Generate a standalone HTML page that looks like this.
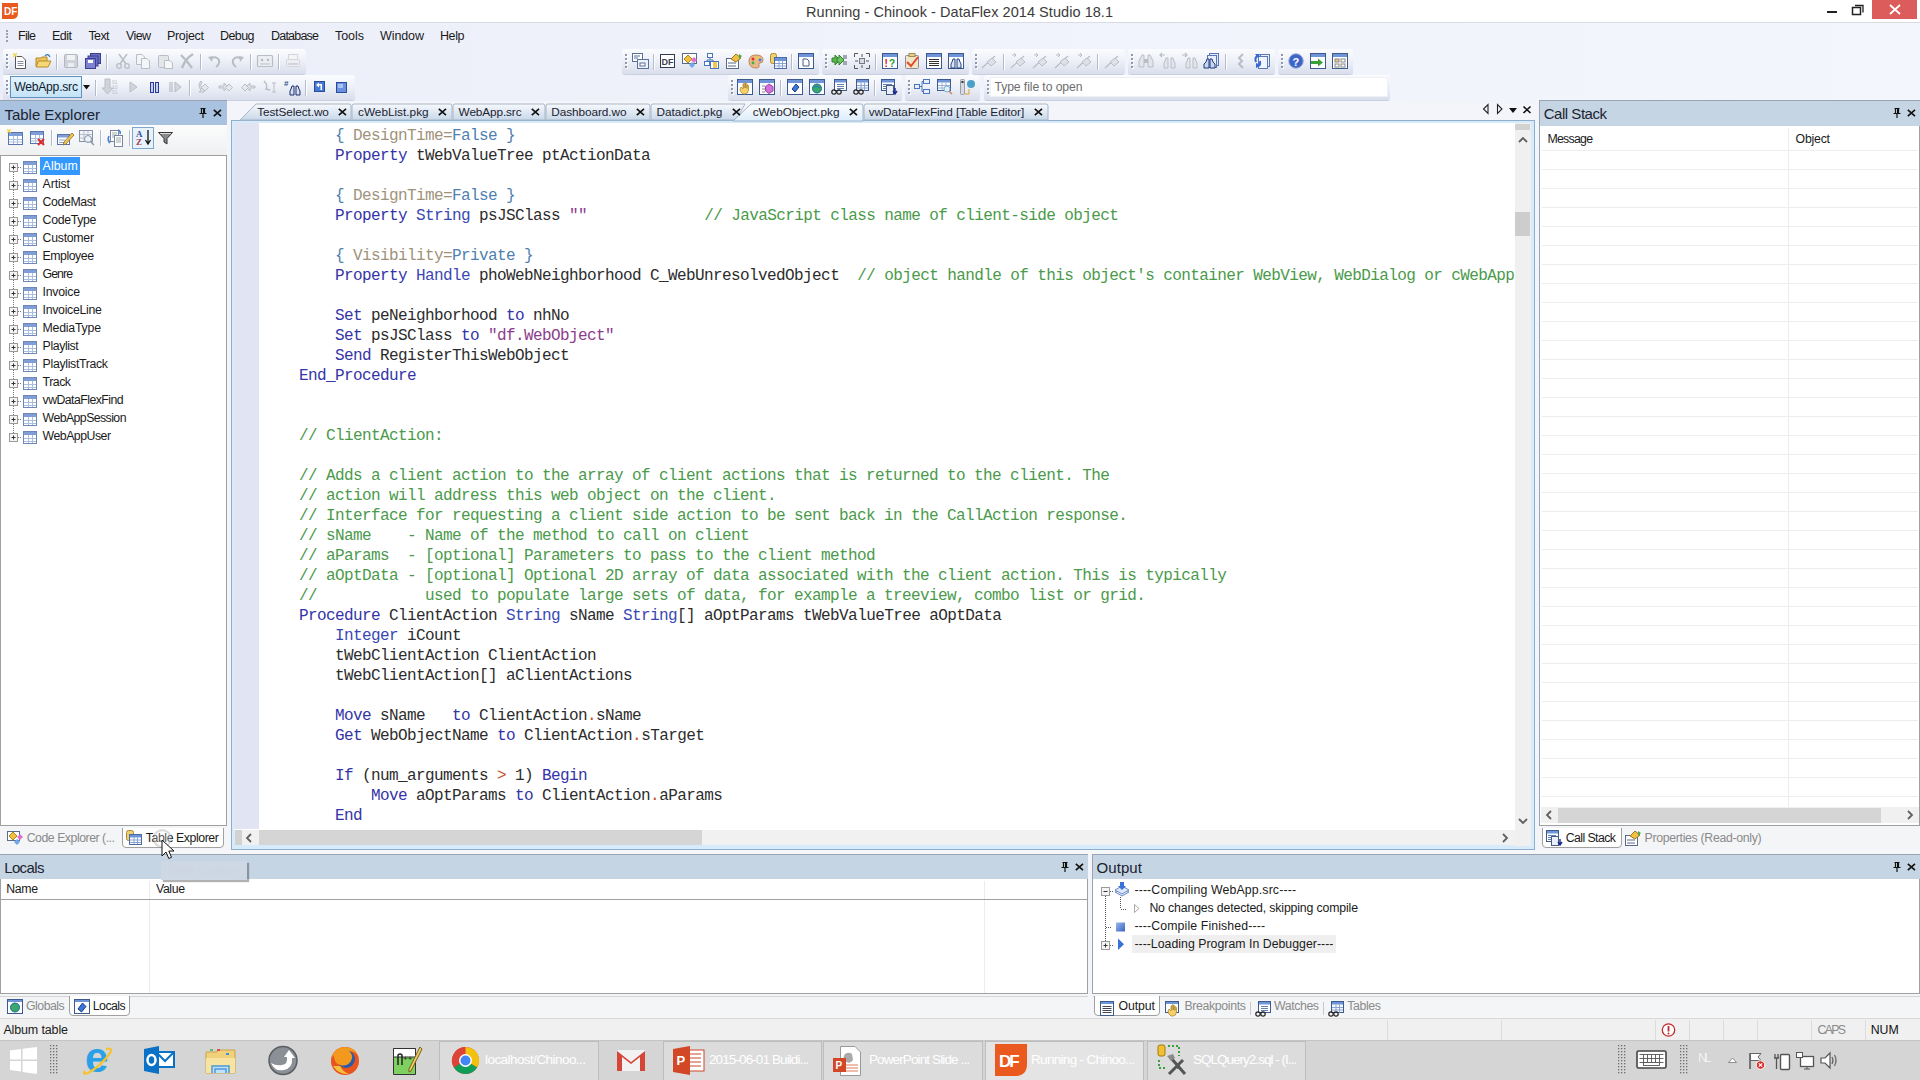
<!DOCTYPE html>
<html><head><meta charset="utf-8"><title>DataFlex Studio</title>
<style>
*{box-sizing:border-box}
html,body{margin:0;padding:0}
body{width:1920px;height:1080px;position:relative;overflow:hidden;background:#f3f5fa;font-family:"Liberation Sans",sans-serif;color:#1e1e1e}
.a{position:absolute}
.t{position:absolute;white-space:pre;line-height:1}
svg{position:absolute;overflow:visible}
#code{position:absolute;left:65px;top:3px;font-family:"Liberation Mono",monospace;font-size:16px;letter-spacing:-0.6px;line-height:20px;white-space:pre;color:#2c2c2c}
#code .k{color:#3434a8}
#code .y{color:#3a48b4}
#code .c{color:#4a9a4a}
#code .s{color:#8c3c8c}
#code .b{color:#4f80b0}
#code .m{color:#a0927a}
#code .o{color:#c8502a}

</style></head><body>
<div class="a" style="left:0px;top:0px;width:1920px;height:22px;background:#fff"></div>
<div class="a" style="left:0px;top:22px;width:1920px;height:1px;background:#d9dce3"></div>
<svg style="left:2px;top:3px" width="16" height="16"><path d="M0 0H16V10Q16 16 10 16H0Z" fill="#ea5a1e"/><text x="2" y="12" font-family="Liberation Sans" font-weight="bold" font-size="10" fill="#fff">DF</text></svg>
<div class="t" style="left:806px;top:5px;font-size:14.5px;color:#3b3b3b;letter-spacing:0.053px;">Running - Chinook - DataFlex 2014 Studio 18.1</div>
<div class="a" style="left:1827px;top:11px;width:10px;height:2px;background:#222"></div>
<svg style="left:1851px;top:4px" width="14" height="12"><rect x="1.5" y="3.5" width="8" height="7" fill="none" stroke="#222" stroke-width="1.5"/><path d="M4 1.5H12V8.5" fill="none" stroke="#222" stroke-width="1.3"/></svg>
<div class="a" style="left:1872px;top:0px;width:45px;height:19px;background:#dc5c5c"></div>
<svg style="left:1889px;top:4px" width="12" height="11"><path d="M1 1L11 10M11 1L1 10" stroke="#fff" stroke-width="1.8"/></svg>
<div class="a" style="left:0px;top:23px;width:1920px;height:78px;background:linear-gradient(90deg,#ebedf8 0%,#eff2fb 40%,#f3f6fc 100%)"></div>
<div class="a" style="left:6px;top:30.0px;width:2px;height:2px;background:#9aa0b0"></div>
<div class="a" style="left:6px;top:33.2px;width:2px;height:2px;background:#9aa0b0"></div>
<div class="a" style="left:6px;top:36.4px;width:2px;height:2px;background:#9aa0b0"></div>
<div class="a" style="left:6px;top:39.6px;width:2px;height:2px;background:#9aa0b0"></div>
<div class="t" style="left:18px;top:30px;font-size:12.5px;color:#1b1b1b;letter-spacing:-0.719px;">File</div>
<div class="t" style="left:52px;top:30px;font-size:12.5px;color:#1b1b1b;letter-spacing:-0.516px;">Edit</div>
<div class="t" style="left:88.5px;top:30px;font-size:12.5px;color:#1b1b1b;letter-spacing:-0.646px;">Text</div>
<div class="t" style="left:126px;top:30px;font-size:12.5px;color:#1b1b1b;letter-spacing:-0.625px;">View</div>
<div class="t" style="left:167px;top:30px;font-size:12.5px;color:#1b1b1b;letter-spacing:-0.318px;">Project</div>
<div class="t" style="left:220px;top:30px;font-size:12.5px;color:#1b1b1b;letter-spacing:-0.586px;">Debug</div>
<div class="t" style="left:271px;top:30px;font-size:12.5px;color:#1b1b1b;letter-spacing:-0.788px;">Database</div>
<div class="t" style="left:335px;top:30px;font-size:12.5px;color:#1b1b1b;letter-spacing:-0.047px;">Tools</div>
<div class="t" style="left:380px;top:30px;font-size:12.5px;color:#1b1b1b;letter-spacing:-0.094px;">Window</div>
<div class="t" style="left:440px;top:30px;font-size:12.5px;color:#1b1b1b;letter-spacing:-0.406px;">Help</div>
<div class="a" style="left:3px;top:49px;width:303px;height:25px;border-radius:3px;background:linear-gradient(#fbfcfe 0%,#eef1f8 45%,#d9deec 100%);box-shadow:0 1px 0 #c9cfe0"></div>
<div class="a" style="left:6px;top:54px;width:2px;height:2px;background:#8f98ab;box-shadow:1px 1px 0 #fff"></div>
<div class="a" style="left:6px;top:58px;width:2px;height:2px;background:#8f98ab;box-shadow:1px 1px 0 #fff"></div>
<div class="a" style="left:6px;top:62px;width:2px;height:2px;background:#8f98ab;box-shadow:1px 1px 0 #fff"></div>
<div class="a" style="left:6px;top:66px;width:2px;height:2px;background:#8f98ab;box-shadow:1px 1px 0 #fff"></div>
<svg style="left:12px;top:53px" width="16" height="16" viewBox="0 0 16 16"><path d="M3.5 3.5H10L13.5 7V15.5H3.5Z" fill="#fff" stroke="#555"/><path d="M5.5 8.5H11.5M5.5 10.5H11.5M5.5 12.5H11.5" stroke="#8a93a6"/><path d="M1 2H5M3 0V4M1 0L5 4M5 0L1 4" stroke="#f2d54a" stroke-width="0.9"/></svg>
<svg style="left:35px;top:53px" width="17" height="16" viewBox="0 0 17 16"><path d="M1 5H6L7 4H12V13H1Z" fill="#e9c45a" stroke="#b98a2a"/><path d="M1 14L3.5 8H16L13 14Z" fill="#f7d776" stroke="#b98a2a"/><path d="M10 3Q13 0 15 4" fill="none" stroke="#3f7fbf" stroke-width="1.3"/></svg>
<div class="a" style="left:56px;top:54px;width:1px;height:16px;background:#b4bbcc;box-shadow:1px 0 0 #fff"></div>
<svg style="left:63px;top:53px" width="16" height="16" viewBox="0 0 16 16"><rect x="1.5" y="1.5" width="13" height="13" rx="1" fill="#cfd2da" stroke="#b3b7c1"/><rect x="4" y="2" width="8" height="5" fill="#fff" opacity="0.7"/><rect x="5" y="10" width="6" height="4" fill="#fff" opacity="0.6"/></svg>
<svg style="left:85px;top:53px" width="16" height="16" viewBox="0 0 16 16"><rect x="5.5" y="0.5" width="10" height="10" fill="#6a6fc4" stroke="#3b3f8f"/><rect x="3" y="3" width="10" height="10" fill="#6a6fc4" stroke="#3b3f8f"/><rect x="0.5" y="5.5" width="10" height="10" fill="#7c81d0" stroke="#3b3f8f"/><rect x="3" y="7" width="5" height="3" fill="#fff"/></svg>
<div class="a" style="left:106px;top:54px;width:1px;height:16px;background:#b4bbcc;box-shadow:1px 0 0 #fff"></div>
<svg style="left:115px;top:53px" width="16" height="16" viewBox="0 0 16 16"><path d="M4 1L11 11M12 1L5 11" stroke="#b9bdc6" stroke-width="1.5"/><circle cx="4" cy="13" r="2.3" fill="none" stroke="#b9bdc6" stroke-width="1.3"/><circle cx="12" cy="13" r="2.3" fill="none" stroke="#b9bdc6" stroke-width="1.3"/></svg>
<svg style="left:135px;top:53px" width="16" height="16" viewBox="0 0 16 16"><path d="M1.5 1.5H7L9.5 4V11.5H1.5Z" fill="#f4f5f8" stroke="#b9bdc6"/><path d="M6.5 5.5H12L14.5 8V15.5H6.5Z" fill="#f4f5f8" stroke="#b9bdc6"/></svg>
<svg style="left:157px;top:53px" width="16" height="16" viewBox="0 0 16 16"><rect x="1.5" y="2.5" width="10" height="12" rx="1" fill="#e4e6ea" stroke="#b9bdc6"/><path d="M7.5 7.5H13L15.5 10V15.5H7.5Z" fill="#f7f7f9" stroke="#b9bdc6"/></svg>
<svg style="left:179px;top:53px" width="16" height="16" viewBox="0 0 16 16"><path d="M2 2Q8 8 13 15M14 1Q6 6 3 15" stroke="#b9bdc6" stroke-width="2.4" fill="none"/></svg>
<div class="a" style="left:200px;top:54px;width:1px;height:16px;background:#b4bbcc;box-shadow:1px 0 0 #fff"></div>
<svg style="left:207px;top:53px" width="16" height="16" viewBox="0 0 16 16"><path d="M3 6Q9 2 12 7Q13 11 9 14" fill="none" stroke="#b9bdc6" stroke-width="2"/><path d="M1 4L5 9L6 3Z" fill="#b9bdc6"/></svg>
<svg style="left:229px;top:53px" width="16" height="16" viewBox="0 0 16 16"><path d="M13 6Q7 2 4 7Q3 11 7 14" fill="none" stroke="#b9bdc6" stroke-width="2"/><path d="M15 4L11 9L10 3Z" fill="#b9bdc6"/></svg>
<div class="a" style="left:250px;top:54px;width:1px;height:16px;background:#b4bbcc;box-shadow:1px 0 0 #fff"></div>
<svg style="left:257px;top:53px" width="16" height="16" viewBox="0 0 16 16"><rect x="0.5" y="2.5" width="15" height="11" rx="1" fill="#eceef2" stroke="#b9bdc6" stroke-width="1.2"/><circle cx="5" cy="7" r="1.3" fill="#b9bdc6"/><circle cx="11" cy="7" r="1.3" fill="#b9bdc6"/><path d="M3 11H13" stroke="#b9bdc6"/></svg>
<div class="a" style="left:278px;top:54px;width:1px;height:16px;background:#b4bbcc;box-shadow:1px 0 0 #fff"></div>
<svg style="left:285px;top:53px" width="16" height="16" viewBox="0 0 16 16"><rect x="3.5" y="1.5" width="9" height="6" fill="#f5f5f7" stroke="#d4d6dc"/><rect x="1.5" y="6.5" width="13" height="7" rx="1" fill="#eceef2" stroke="#d4d6dc"/><path d="M3 11H13" stroke="#b9bdc6"/></svg>
<div class="a" style="left:622px;top:49px;width:197px;height:25px;border-radius:3px;background:linear-gradient(#fbfcfe 0%,#eef1f8 45%,#d9deec 100%);box-shadow:0 1px 0 #c9cfe0"></div>
<div class="a" style="left:625px;top:54px;width:2px;height:2px;background:#8f98ab;box-shadow:1px 1px 0 #fff"></div>
<div class="a" style="left:625px;top:58px;width:2px;height:2px;background:#8f98ab;box-shadow:1px 1px 0 #fff"></div>
<div class="a" style="left:625px;top:62px;width:2px;height:2px;background:#8f98ab;box-shadow:1px 1px 0 #fff"></div>
<div class="a" style="left:625px;top:66px;width:2px;height:2px;background:#8f98ab;box-shadow:1px 1px 0 #fff"></div>
<svg style="left:632px;top:53px" width="17" height="16" viewBox="0 0 17 16"><rect x="0.5" y="0.5" width="10" height="8" fill="#fff" stroke="#5a6f9a"/><path d="M2 3H8M2 5H6" stroke="#5a6f9a"/><rect x="5.5" y="6.5" width="11" height="9" fill="#eef2fa" stroke="#5a6f9a"/><rect x="8" y="10" width="5" height="3" fill="#fff" stroke="#5a6f9a"/></svg>
<div class="a" style="left:653px;top:54px;width:1px;height:16px;background:#b4bbcc;box-shadow:1px 0 0 #fff"></div>
<svg style="left:660px;top:53px" width="15" height="16" viewBox="0 0 15 16"><rect x="0.5" y="1.5" width="14" height="13" fill="#fff" stroke="#333c4e"/><text x="1.5" y="12" font-family="Liberation Sans" font-weight="bold" font-size="9" fill="#39414f">DF</text></svg>
<svg style="left:682px;top:53px" width="16" height="16" viewBox="0 0 16 16"><rect x="0.5" y="0.5" width="14" height="10" fill="#fff" stroke="#5b6a8f"/><path d="M2 6L6 2L10 6L6 10Z" fill="#f0c040" stroke="#b0861c"/><path d="M9 7L12 4L15 7L12 10Z" fill="#e070d0"/><path d="M7 12L10 9L13 12L10 15Z" fill="#6ea8e8"/></svg>
<svg style="left:704px;top:53px" width="16" height="16" viewBox="0 0 16 16"><rect x="3.5" y="0.5" width="5" height="4" fill="#fff" stroke="#4a74c0"/><rect x="0.5" y="8.5" width="5" height="4" fill="#fff" stroke="#4a74c0"/><path d="M6 5V7H3V8M6 7H9V9" stroke="#4a74c0" fill="none"/><rect x="6.5" y="8.5" width="8" height="7" fill="#fff" stroke="#4a74c0"/><rect x="9" y="9" width="4" height="6" fill="#f0c850"/></svg>
<svg style="left:726px;top:53px" width="17" height="16" viewBox="0 0 17 16"><rect x="0.5" y="5.5" width="12" height="10" fill="#fff" stroke="#5a6a8a"/><path d="M2 10H10M2 13H10" stroke="#5a6a8a"/><path d="M5 6L10 1L15 5L10 9Z" fill="#f0c040" stroke="#a07820"/><path d="M13 1L16 3L13 6Z" fill="#4ca84c"/></svg>
<svg style="left:748px;top:53px" width="16" height="16" viewBox="0 0 16 16"><path d="M1 8Q1 2 8 2Q15 2 15 7Q15 10 12 10Q10 10 11 12Q12 15 8 15Q1 15 1 8Z" fill="#e8b88a" stroke="#c0895a"/><circle cx="5" cy="6" r="1.5" fill="#e03030"/><circle cx="9" cy="5" r="1.5" fill="#f0d030"/><circle cx="12" cy="7" r="1.4" fill="#4080e0"/><circle cx="5" cy="10" r="1.4" fill="#40b040"/></svg>
<svg style="left:770px;top:53px" width="17" height="16" viewBox="0 0 17 16"><rect x="0.5" y="0.5" width="6" height="10" rx="2" fill="#f0d070" stroke="#b08a30"/><rect x="4.5" y="4.5" width="12" height="11" fill="#fff" stroke="#4c6aa8"/><rect x="5" y="5" width="11" height="3" fill="#6f95d8"/><path d="M5 10.5H16M5 13H16M9 8V15M12.5 8V15" stroke="#8aa3d0"/></svg>
<div class="a" style="left:791px;top:54px;width:1px;height:16px;background:#b4bbcc;box-shadow:1px 0 0 #fff"></div>
<svg style="left:798px;top:53px" width="16" height="16" viewBox="0 0 16 16"><rect x="0.5" y="0.5" width="15" height="15" fill="#fff" stroke="#3d5a8f"/><rect x="1" y="1" width="14" height="3" fill="#6f95d8"/><path d="M5 6H9L11 8V13H5Z" fill="#fff" stroke="#4a5a80"/></svg>
<div class="a" style="left:822px;top:49px;width:147px;height:25px;border-radius:3px;background:linear-gradient(#fbfcfe 0%,#eef1f8 45%,#d9deec 100%);box-shadow:0 1px 0 #c9cfe0"></div>
<div class="a" style="left:825px;top:54px;width:2px;height:2px;background:#8f98ab;box-shadow:1px 1px 0 #fff"></div>
<div class="a" style="left:825px;top:58px;width:2px;height:2px;background:#8f98ab;box-shadow:1px 1px 0 #fff"></div>
<div class="a" style="left:825px;top:62px;width:2px;height:2px;background:#8f98ab;box-shadow:1px 1px 0 #fff"></div>
<div class="a" style="left:825px;top:66px;width:2px;height:2px;background:#8f98ab;box-shadow:1px 1px 0 #fff"></div>
<svg style="left:832px;top:53px" width="16" height="16" viewBox="0 0 16 16"><path d="M0 5H3V2L8 7L3 12V9H0Z" fill="#5cb84c" stroke="#2f7f2f"/><path d="M5 5H7V2L12 7L7 12V9H5Z" fill="#6cc85c" stroke="#2f7f2f"/><rect x="11" y="2" width="4" height="4" fill="#a0a6b0"/><rect x="11" y="8" width="4" height="4" fill="#a0a6b0"/></svg>
<svg style="left:854px;top:53px" width="16" height="16" viewBox="0 0 16 16"><path d="M0.5 4V0.5H4M12 0.5H15.5V4M15.5 12V15.5H12M4 15.5H0.5V12" fill="none" stroke="#556" /><rect x="5.5" y="5.5" width="5" height="5" fill="#d8dbe2" stroke="#778"/><path d="M8 1V4M8 12V15M1 8H4M12 8H15" stroke="#556"/></svg>
<div class="a" style="left:875px;top:54px;width:1px;height:16px;background:#b4bbcc;box-shadow:1px 0 0 #fff"></div>
<svg style="left:882px;top:53px" width="16" height="16" viewBox="0 0 16 16"><rect x="0.5" y="0.5" width="15" height="15" fill="#fff" stroke="#3d5a8f"/><rect x="1" y="1" width="14" height="3" fill="#6f95d8"/><text x="2.5" y="13.5" font-family="Liberation Sans" font-weight="bold" font-size="10" fill="#d02020">!</text><text x="7" y="13.5" font-family="Liberation Sans" font-weight="bold" font-size="10" fill="#2a9a2a">?</text></svg>
<svg style="left:905px;top:53px" width="14" height="16" viewBox="0 0 14 16"><rect x="0.5" y="2.5" width="13" height="13" rx="1" fill="#f1e6c8" stroke="#8a8a9a"/><rect x="4" y="0.5" width="6" height="3" fill="#e8d080" stroke="#a08a50"/><path d="M2 9L6 13L13 4" fill="none" stroke="#e04a2a" stroke-width="2"/></svg>
<svg style="left:926px;top:53px" width="16" height="16" viewBox="0 0 16 16"><rect x="0.5" y="0.5" width="15" height="15" fill="#fff" stroke="#3d5a8f"/><rect x="1" y="1" width="14" height="3" fill="#6f95d8"/><path d="M3 6.5H13M3 8.5H13M3 10.5H13M3 12.5H13" stroke="#333"/></svg>
<svg style="left:948px;top:53px" width="16" height="16" viewBox="0 0 16 16"><rect x="0.5" y="0.5" width="15" height="15" fill="#fff" stroke="#3d5a8f"/><rect x="1" y="1" width="14" height="3" fill="#6f95d8"/><path d="M4 9L5 6H7V15H3V11Z M12 9L11 6H9V15H13V11Z" fill="#dde6f5" stroke="#243f7a"/></svg>
<div class="a" style="left:972px;top:49px;width:153px;height:25px;border-radius:3px;background:linear-gradient(#fbfcfe 0%,#eef1f8 45%,#d9deec 100%);box-shadow:0 1px 0 #c9cfe0"></div>
<div class="a" style="left:975px;top:54px;width:2px;height:2px;background:#8f98ab;box-shadow:1px 1px 0 #fff"></div>
<div class="a" style="left:975px;top:58px;width:2px;height:2px;background:#8f98ab;box-shadow:1px 1px 0 #fff"></div>
<div class="a" style="left:975px;top:62px;width:2px;height:2px;background:#8f98ab;box-shadow:1px 1px 0 #fff"></div>
<div class="a" style="left:975px;top:66px;width:2px;height:2px;background:#8f98ab;box-shadow:1px 1px 0 #fff"></div>
<svg style="left:981px;top:53px" width="16" height="16" viewBox="0 0 16 16"><path d="M1 15L14 3" stroke="#b9bdc6" stroke-width="1.2"/><path d="M6 9L11 5L15 9L10 13Z" fill="#dfe1e6" stroke="#b9bdc6"/></svg>
<div class="a" style="left:1003px;top:54px;width:1px;height:16px;background:#b4bbcc;box-shadow:1px 0 0 #fff"></div>
<svg style="left:1010px;top:53px" width="16" height="16" viewBox="0 0 16 16"><path d="M1 15L14 3" stroke="#b9bdc6" stroke-width="1.2"/><path d="M6 9L11 5L15 9L10 13Z" fill="#dfe1e6" stroke="#b9bdc6"/><path d="M2 2H6M4 0L6 2L4 4" fill="none" stroke="#b9bdc6"/></svg>
<svg style="left:1032px;top:53px" width="16" height="16" viewBox="0 0 16 16"><path d="M1 15L14 3" stroke="#b9bdc6" stroke-width="1.2"/><path d="M6 9L11 5L15 9L10 13Z" fill="#dfe1e6" stroke="#b9bdc6"/><path d="M2 2H6M4 0L6 2L4 4" fill="none" stroke="#b9bdc6"/></svg>
<svg style="left:1054px;top:53px" width="16" height="16" viewBox="0 0 16 16"><path d="M1 15L14 3" stroke="#b9bdc6" stroke-width="1.2"/><path d="M6 9L11 5L15 9L10 13Z" fill="#dfe1e6" stroke="#b9bdc6"/><path d="M2 2H6M4 0L6 2L4 4" fill="none" stroke="#b9bdc6"/></svg>
<svg style="left:1076px;top:53px" width="16" height="16" viewBox="0 0 16 16"><path d="M1 15L14 3" stroke="#b9bdc6" stroke-width="1.2"/><path d="M6 9L11 5L15 9L10 13Z" fill="#dfe1e6" stroke="#b9bdc6"/><path d="M2 2H6M4 0L6 2L4 4" fill="none" stroke="#b9bdc6"/></svg>
<div class="a" style="left:1097px;top:54px;width:1px;height:16px;background:#b4bbcc;box-shadow:1px 0 0 #fff"></div>
<svg style="left:1104px;top:53px" width="16" height="16" viewBox="0 0 16 16"><path d="M1 15L14 3" stroke="#b9bdc6" stroke-width="1.2"/><path d="M6 9L11 5L15 9L10 13Z" fill="#dfe1e6" stroke="#b9bdc6"/></svg>
<div class="a" style="left:1128px;top:49px;width:147px;height:25px;border-radius:3px;background:linear-gradient(#fbfcfe 0%,#eef1f8 45%,#d9deec 100%);box-shadow:0 1px 0 #c9cfe0"></div>
<div class="a" style="left:1131px;top:54px;width:2px;height:2px;background:#8f98ab;box-shadow:1px 1px 0 #fff"></div>
<div class="a" style="left:1131px;top:58px;width:2px;height:2px;background:#8f98ab;box-shadow:1px 1px 0 #fff"></div>
<div class="a" style="left:1131px;top:62px;width:2px;height:2px;background:#8f98ab;box-shadow:1px 1px 0 #fff"></div>
<div class="a" style="left:1131px;top:66px;width:2px;height:2px;background:#8f98ab;box-shadow:1px 1px 0 #fff"></div>
<svg style="left:1138px;top:53px" width="16" height="16" viewBox="0 0 16 16"><path d="M2 6L4 2H6V14H1V8Z M14 6L12 2H10V14H15V8Z" fill="#e3e5ea" stroke="#b9bdc6"/><rect x="6" y="6" width="4" height="4" fill="#b9bdc6"/></svg>
<svg style="left:1160px;top:53px" width="16" height="16" viewBox="0 0 16 16"><path d="M5 8L6 5H8V15H4V10Z M14 8L13 5H11V15H15V10Z" fill="#e3e5ea" stroke="#b9bdc6"/><path d="M0 2H5M2 0L0 2L2 4" fill="none" stroke="#b9bdc6" stroke-width="1.2"/></svg>
<svg style="left:1182px;top:53px" width="16" height="16" viewBox="0 0 16 16"><path d="M5 8L6 5H8V15H4V10Z M14 8L13 5H11V15H15V10Z" fill="#e3e5ea" stroke="#b9bdc6"/><path d="M0 2H5M3 0L5 2L3 4" fill="none" stroke="#b9bdc6" stroke-width="1.2"/></svg>
<svg style="left:1203px;top:53px" width="17" height="16" viewBox="0 0 17 16"><rect x="6.5" y="0.5" width="9" height="12" fill="#dfe8f8" stroke="#5a78b8"/><rect x="4.5" y="2.5" width="9" height="12" fill="#e8eefa" stroke="#5a78b8"/><path d="M3 9L4 6H6V15H1V11Z M10 9L9 6H7V15H12V11Z" fill="#c8d6f0" stroke="#1f3a78"/></svg>
<div class="a" style="left:1225px;top:54px;width:1px;height:16px;background:#b4bbcc;box-shadow:1px 0 0 #fff"></div>
<svg style="left:1235px;top:53px" width="16" height="16" viewBox="0 0 16 16"><path d="M8 1L4 5L7 8L4 11L8 15" fill="none" stroke="#b9bdc6" stroke-width="2"/></svg>
<svg style="left:1253px;top:53px" width="18" height="16" viewBox="0 0 18 16"><rect x="7.5" y="1.5" width="9" height="12" fill="#e8eefa" stroke="#5a78b8"/><rect x="5.5" y="3.5" width="9" height="12" fill="#f0f4fc" stroke="#5a78b8"/><path d="M6 2Q1 4 3 9M3 13Q8 14 7 8" fill="none" stroke="#3a6ad0" stroke-width="2"/><path d="M2 1L7 1L5 5Z M3 15L8 12L3 10Z" fill="#3a6ad0"/></svg>
<div class="a" style="left:1278px;top:49px;width:75px;height:25px;border-radius:3px;background:linear-gradient(#fbfcfe 0%,#eef1f8 45%,#d9deec 100%);box-shadow:0 1px 0 #c9cfe0"></div>
<div class="a" style="left:1281px;top:54px;width:2px;height:2px;background:#8f98ab;box-shadow:1px 1px 0 #fff"></div>
<div class="a" style="left:1281px;top:58px;width:2px;height:2px;background:#8f98ab;box-shadow:1px 1px 0 #fff"></div>
<div class="a" style="left:1281px;top:62px;width:2px;height:2px;background:#8f98ab;box-shadow:1px 1px 0 #fff"></div>
<div class="a" style="left:1281px;top:66px;width:2px;height:2px;background:#8f98ab;box-shadow:1px 1px 0 #fff"></div>
<svg style="left:1288px;top:53px" width="16" height="16" viewBox="0 0 16 16"><circle cx="8" cy="8" r="7.2" fill="#3f64c8" stroke="#8ea5d8"/><text x="4.4" y="12.5" font-family="Liberation Sans" font-weight="bold" font-size="11" fill="#fff">?</text></svg>
<svg style="left:1310px;top:53px" width="16" height="16" viewBox="0 0 16 16"><rect x="0.5" y="0.5" width="15" height="15" fill="#fff" stroke="#3d5a8f"/><rect x="1" y="1" width="14" height="3" fill="#6f95d8"/><path d="M1 8H8V5.5L13 9.5L8 13.5V11H1Z" fill="#3aa03a"/></svg>
<svg style="left:1332px;top:53px" width="16" height="16" viewBox="0 0 16 16"><rect x="0.5" y="0.5" width="15" height="15" fill="#fff" stroke="#3d5a8f"/><rect x="1" y="1" width="14" height="3" fill="#6f95d8"/><rect x="3" y="6" width="4" height="3" fill="#f0c870" stroke="#888"/><rect x="9" y="6" width="4" height="3" fill="#fff" stroke="#888"/><rect x="3" y="11" width="4" height="3" fill="#fff" stroke="#888"/><rect x="9" y="11" width="4" height="3" fill="#fff" stroke="#888"/></svg>
<div class="a" style="left:3px;top:75px;width:352px;height:25px;border-radius:3px;background:linear-gradient(#fbfcfe 0%,#eef1f8 45%,#d9deec 100%);box-shadow:0 1px 0 #c9cfe0"></div>
<div class="a" style="left:6px;top:80px;width:2px;height:2px;background:#8f98ab;box-shadow:1px 1px 0 #fff"></div>
<div class="a" style="left:6px;top:84px;width:2px;height:2px;background:#8f98ab;box-shadow:1px 1px 0 #fff"></div>
<div class="a" style="left:6px;top:88px;width:2px;height:2px;background:#8f98ab;box-shadow:1px 1px 0 #fff"></div>
<div class="a" style="left:6px;top:92px;width:2px;height:2px;background:#8f98ab;box-shadow:1px 1px 0 #fff"></div>
<div class="a" style="left:10px;top:76px;width:72px;height:22px;border:1px solid #5f91bd;background:linear-gradient(#e4f3fc,#c3e3f7)"></div>
<div class="t" style="left:14.2px;top:81px;font-size:12.2px;color:#10202c;letter-spacing:-0.262px;">WebApp.src</div>
<svg style="left:83px;top:85px" width="8" height="5" viewBox="0 0 8 5"><path d="M0 0H7L3.5 4.5Z" fill="#111"/></svg>
<div class="a" style="left:95px;top:80px;width:1px;height:16px;background:#b4bbcc;box-shadow:1px 0 0 #fff"></div>
<svg style="left:102px;top:79px" width="16" height="16" viewBox="0 0 16 16"><path d="M3 0H8V9H11L5.5 15L0 9H3Z" fill="#d0d3da" stroke="#b9bdc6"/><text x="10" y="5" font-size="5" fill="#b9bdc6" font-family="Liberation Sans">01</text><text x="10" y="10" font-size="5" fill="#b9bdc6" font-family="Liberation Sans">10</text><text x="10" y="15" font-size="5" fill="#b9bdc6" font-family="Liberation Sans">01</text></svg>
<svg style="left:126px;top:79px" width="16" height="16" viewBox="0 0 16 16"><path d="M4 3L11 8L4 13Z" fill="#d2d5db" stroke="#b9bdc6"/></svg>
<svg style="left:148px;top:79px" width="12" height="16" viewBox="0 0 12 16"><rect x="2.5" y="3.5" width="3" height="10" fill="#c8d0f0" stroke="#2a3a9a"/><rect x="7.5" y="3.5" width="3" height="10" fill="#c8d0f0" stroke="#2a3a9a"/></svg>
<svg style="left:169px;top:79px" width="16" height="16" viewBox="0 0 16 16"><path d="M1 3V13M3 3V13" stroke="#b9bdc6" stroke-width="1.2"/><path d="M6 3L12 8L6 13Z" fill="#d2d5db" stroke="#b9bdc6"/></svg>
<div class="a" style="left:189px;top:80px;width:1px;height:16px;background:#b4bbcc;box-shadow:1px 0 0 #fff"></div>
<svg style="left:196px;top:79px" width="16" height="16" viewBox="0 0 16 16"><path d="M5 2Q1 6 5 11L3 13H8V8L6 10Q3 6 6 3Z" fill="#dfe1e6" stroke="#b9bdc6"/><path d="M9 5L12.5 8.5L9 12L5.5 8.5Z" fill="#e6e8ec" stroke="#b9bdc6"/></svg>
<svg style="left:218px;top:79px" width="16" height="16" viewBox="0 0 16 16"><path d="M1 7H6V4L10 8L6 12V9H1Z" fill="#e2e4e8" stroke="#b9bdc6"/><path d="M11 5L14.5 8.5L11 12L7.5 8.5Z" fill="#e6e8ec" stroke="#b9bdc6"/></svg>
<svg style="left:240px;top:79px" width="16" height="16" viewBox="0 0 16 16"><path d="M15 7H10V4L6 8L10 12V9H15Z" fill="#e2e4e8" stroke="#b9bdc6"/><path d="M5 5L8.5 8.5L5 12L1.5 8.5Z" fill="#e6e8ec" stroke="#b9bdc6"/></svg>
<svg style="left:262px;top:79px" width="16" height="16" viewBox="0 0 16 16"><path d="M2 2Q6 6 4 10L8 11" fill="none" stroke="#b9bdc6" stroke-width="1.4"/><path d="M10 4H14M12 4V13M10 13H14" stroke="#b9bdc6"/></svg>
<svg style="left:284px;top:79px" width="17" height="17" viewBox="0 0 17 17"><text x="0" y="7" font-family="Liberation Sans" font-weight="bold" font-size="8" fill="#2a5a8a">#</text><path d="M7 10L8 7H10V16H6V12Z M15 10L14 7H12V16H16V12Z" fill="#d6e0f2" stroke="#1f2f6a"/></svg>
<div class="a" style="left:305px;top:80px;width:1px;height:16px;background:#b4bbcc;box-shadow:1px 0 0 #fff"></div>
<svg style="left:314px;top:81px" width="11" height="11" viewBox="0 0 11 11"><rect x="0.5" y="0.5" width="10" height="10" fill="#4a7ad8" stroke="#2a4a9a"/><path d="M2 4L5 1.5V3H8V9H6.5V4.5H5V6.5Z" fill="#fff"/></svg>
<svg style="left:336px;top:82px" width="11" height="11" viewBox="0 0 11 11"><rect x="0.5" y="0.5" width="10" height="10" fill="#6a90e0" stroke="#2a4a9a"/><rect x="2" y="2" width="5" height="4" fill="#a9c4f2"/></svg>
<div class="a" style="left:728px;top:75px;width:174px;height:25px;border-radius:3px;background:linear-gradient(#fbfcfe 0%,#eef1f8 45%,#d9deec 100%);box-shadow:0 1px 0 #c9cfe0"></div>
<div class="a" style="left:731px;top:80px;width:2px;height:2px;background:#8f98ab;box-shadow:1px 1px 0 #fff"></div>
<div class="a" style="left:731px;top:84px;width:2px;height:2px;background:#8f98ab;box-shadow:1px 1px 0 #fff"></div>
<div class="a" style="left:731px;top:88px;width:2px;height:2px;background:#8f98ab;box-shadow:1px 1px 0 #fff"></div>
<div class="a" style="left:731px;top:92px;width:2px;height:2px;background:#8f98ab;box-shadow:1px 1px 0 #fff"></div>
<svg style="left:737px;top:79px" width="16" height="16" viewBox="0 0 16 16"><rect x="0.5" y="0.5" width="15" height="15" fill="#fff" stroke="#3d5a8f"/><rect x="1" y="1" width="14" height="3" fill="#6f95d8"/><path d="M6 15Q3 13 3 10L4 8L6 10V5.5Q6 4.5 7 5V9V4Q8 3.5 8.5 4V9V4.5Q9.5 4 10 5V9.5V6Q11 5.5 11.5 6.5V11Q11 15 8 15Z" fill="#f6d06a" stroke="#b08a30" stroke-width="0.8"/></svg>
<svg style="left:759px;top:79px" width="16" height="16" viewBox="0 0 16 16"><rect x="0.5" y="0.5" width="15" height="15" fill="#fff" stroke="#3d5a8f"/><rect x="1" y="1" width="14" height="3" fill="#6f95d8"/><path d="M3 7H6M3 10H6M3 13H6" stroke="#888"/><path d="M10 5L14 7.5V12L10 14.5L6.5 12V7.5Z" fill="#d070d8" stroke="#a040b0"/></svg>
<div class="a" style="left:780px;top:80px;width:1px;height:16px;background:#b4bbcc;box-shadow:1px 0 0 #fff"></div>
<svg style="left:787px;top:79px" width="16" height="16" viewBox="0 0 16 16"><rect x="0.5" y="0.5" width="15" height="15" fill="#fff" stroke="#3d5a8f"/><rect x="1" y="1" width="14" height="3" fill="#6f95d8"/><path d="M5 10L9 5L12 8L8 13Z" fill="#3a78d8" stroke="#1a3a8a"/></svg>
<svg style="left:809px;top:79px" width="16" height="16" viewBox="0 0 16 16"><rect x="0.5" y="0.5" width="15" height="15" fill="#fff" stroke="#3d5a8f"/><rect x="1" y="1" width="14" height="3" fill="#6f95d8"/><circle cx="8" cy="9.5" r="4.5" fill="#3aa86a" stroke="#1a6a9a"/><path d="M5 8Q8 6 11 9" stroke="#2a70c8" fill="none"/></svg>
<svg style="left:831px;top:79px" width="16" height="16" viewBox="0 0 16 16"><rect x="3.5" y="0.5" width="12" height="11" fill="#fff" stroke="#3d5a8f"/><rect x="4" y="1" width="11" height="2.5" fill="#6f95d8"/><path d="M6 5.5H13M6 7.5H13M6 9.5H13" stroke="#6080b0"/><circle cx="3" cy="13" r="2.2" fill="none" stroke="#222" stroke-width="1.2"/><circle cx="8" cy="13" r="2.2" fill="none" stroke="#222" stroke-width="1.2"/></svg>
<svg style="left:853px;top:79px" width="16" height="16" viewBox="0 0 16 16"><rect x="3.5" y="0.5" width="12" height="11" fill="#f6f8fc" stroke="#3d5a8f"/><rect x="4" y="1" width="11" height="2.5" fill="#6f95d8"/><path d="M4 6.5H15M4 9H15M8 3.5V11.5M11.5 3.5V11.5" stroke="#8aa3d0"/><circle cx="3" cy="13" r="2.2" fill="none" stroke="#222" stroke-width="1.2"/><circle cx="8" cy="13" r="2.2" fill="none" stroke="#222" stroke-width="1.2"/></svg>
<div class="a" style="left:874px;top:80px;width:1px;height:16px;background:#b4bbcc;box-shadow:1px 0 0 #fff"></div>
<svg style="left:881px;top:79px" width="17" height="16" viewBox="0 0 17 16"><rect x="0.5" y="0.5" width="13" height="11" fill="#fff" stroke="#3d5a8f"/><rect x="1" y="1" width="12" height="2.5" fill="#6f95d8"/><path d="M2 5.5H11M2 7.5H11M2 9.5H6" stroke="#6080b0"/><rect x="5.5" y="6.5" width="7" height="9" fill="#e8eefa" stroke="#4a5a80"/><path d="M14 9V14M12 12L14 15L16 12" stroke="#1a2a8a" stroke-width="1.4" fill="none"/></svg>
<div class="a" style="left:905px;top:75px;width:75px;height:25px;border-radius:3px;background:linear-gradient(#fbfcfe 0%,#eef1f8 45%,#d9deec 100%);box-shadow:0 1px 0 #c9cfe0"></div>
<div class="a" style="left:908px;top:80px;width:2px;height:2px;background:#8f98ab;box-shadow:1px 1px 0 #fff"></div>
<div class="a" style="left:908px;top:84px;width:2px;height:2px;background:#8f98ab;box-shadow:1px 1px 0 #fff"></div>
<div class="a" style="left:908px;top:88px;width:2px;height:2px;background:#8f98ab;box-shadow:1px 1px 0 #fff"></div>
<div class="a" style="left:908px;top:92px;width:2px;height:2px;background:#8f98ab;box-shadow:1px 1px 0 #fff"></div>
<svg style="left:914px;top:79px" width="16" height="16" viewBox="0 0 16 16"><rect x="0.5" y="5.5" width="5" height="4" fill="#e8eefa" stroke="#4a74c0"/><rect x="9.5" y="0.5" width="6" height="4" fill="#e8eefa" stroke="#4a74c0"/><rect x="9.5" y="10.5" width="6" height="4" fill="#e8eefa" stroke="#4a74c0"/><path d="M6 7.5H8V2.5H9M8 7.5V12.5H9" stroke="#4a74c0" fill="none"/></svg>
<svg style="left:937px;top:79px" width="16" height="16" viewBox="0 0 16 16"><rect x="0.5" y="0.5" width="13" height="11" fill="#fff" stroke="#3d5a8f"/><rect x="1" y="1" width="12" height="2.5" fill="#6f95d8"/><path d="M1 6.5H13M1 9H13M5 3.5V11.5M9 3.5V11.5" stroke="#9ab0d8"/><circle cx="10" cy="10" r="3" fill="#dff0fa" stroke="#7ab0d0"/><path d="M12 12L15 15" stroke="#d08060" stroke-width="1.5"/></svg>
<svg style="left:959px;top:79px" width="17" height="16" viewBox="0 0 17 16"><rect x="1.5" y="0.5" width="4" height="15" rx="1" fill="#d8dadf" stroke="#9a9da5"/><rect x="2.5" y="2" width="2" height="2" fill="#333"/><circle cx="12" cy="5" r="4" fill="#4aa0c8"/><path d="M6 15H10V10" fill="none" stroke="#e0a030"/></svg>
<div class="a" style="left:984px;top:75px;width:406px;height:25px;border-radius:3px;background:linear-gradient(#fbfcfe 0%,#eef1f8 45%,#d9deec 100%);box-shadow:0 1px 0 #c9cfe0"></div>
<div class="a" style="left:987px;top:80px;width:2px;height:2px;background:#8f98ab;box-shadow:1px 1px 0 #fff"></div>
<div class="a" style="left:987px;top:84px;width:2px;height:2px;background:#8f98ab;box-shadow:1px 1px 0 #fff"></div>
<div class="a" style="left:987px;top:88px;width:2px;height:2px;background:#8f98ab;box-shadow:1px 1px 0 #fff"></div>
<div class="a" style="left:987px;top:92px;width:2px;height:2px;background:#8f98ab;box-shadow:1px 1px 0 #fff"></div>
<div class="a" style="left:990px;top:77px;width:398px;height:20px;background:#fff;box-shadow:inset 0 0 0 1px #eef0f4"></div>
<div class="t" style="left:994.5px;top:81px;font-size:12.2px;color:#6d6d6d;letter-spacing:-0.090px;">Type file to open</div>
<div class="a" style="left:0px;top:100px;width:227px;height:1px;background:#98a4b3"></div>
<div class="a" style="left:0px;top:101px;width:227px;height:24px;background:#a8c2df"></div>
<div class="t" style="left:4.5px;top:106.55px;font-size:15px;color:#1b2330;letter-spacing:-0.030px;">Table Explorer</div>
<div class="a" style="left:0px;top:125px;width:227px;height:30px;background:linear-gradient(#fcfcfc,#eef0f2)"></div>
<div class="a" style="left:0px;top:155px;width:227px;height:671px;background:#fff;border:1px solid #a0a0a0"></div>
<div class="a" style="left:231px;top:120px;width:1304px;height:730px;background:#d7ebfa;border:1px solid #8dafcb"></div>
<div class="a" style="left:234px;top:123px;width:1281px;height:706px;background:#fff"></div>
<div class="a" style="left:234px;top:123px;width:25px;height:706px;background:#e1e4f3"></div>
<div class="a" style="left:234px;top:123px;width:1281px;height:706px;overflow:hidden"><div id="code">    <span class="b">{ </span><span class="m">DesignTime=</span><span class="b">False }</span>
    <span class="k">Property</span> tWebValueTree ptActionData

    <span class="b">{ </span><span class="m">DesignTime=</span><span class="b">False }</span>
    <span class="k">Property</span> <span class="y">String</span> psJSClass <span class="s">&quot;&quot;</span>             <span class="c">// JavaScript class name of client-side object</span>

    <span class="b">{ </span><span class="m">Visibility=</span><span class="b">Private }</span>
    <span class="k">Property</span> <span class="y">Handle</span> phoWebNeighborhood C_WebUnresolvedObject  <span class="c">// object handle of this object&#x27;s container WebView, WebDialog or cWebApp</span>

    <span class="k">Set</span> peNeighborhood <span class="k">to</span> nhNo
    <span class="k">Set</span> psJSClass <span class="k">to</span> <span class="s">&quot;df.WebObject&quot;</span>
    <span class="k">Send</span> RegisterThisWebObject
<span class="k">End_Procedure</span>


<span class="c">// ClientAction:</span>

<span class="c">// Adds a client action to the array of client actions that is returned to the client. The</span>
<span class="c">// action will address this web object on the client.</span>
<span class="c">// Interface for requesting a client side action to be sent back in the CallAction response.</span>
<span class="c">// sName    - Name of the method to call on client</span>
<span class="c">// aParams  - [optional] Parameters to pass to the client method</span>
<span class="c">// aOptData - [optional] Optional 2D array of data associated with the client action. This is typically</span>
<span class="c">//            used to populate large sets of data, for example a treeview, combo list or grid.</span>
<span class="k">Procedure</span> ClientAction <span class="y">String</span> sName <span class="y">String</span>[] aOptParams tWebValueTree aOptData
    <span class="y">Integer</span> iCount
    tWebClientAction ClientAction
    tWebClientAction[] aClientActions

    <span class="k">Move</span> sName   <span class="k">to</span> ClientAction<span class="o">.</span>sName
    <span class="k">Get</span> WebObjectName <span class="k">to</span> ClientAction<span class="o">.</span>sTarget

    <span class="k">If</span> (num_arguments <span class="o">&gt;</span> 1) <span class="k">Begin</span>
        <span class="k">Move</span> aOptParams <span class="k">to</span> ClientAction<span class="o">.</span>aParams
    <span class="k">End</span></div></div>
<div class="a" style="left:1539px;top:100px;width:381px;height:1px;background:#98a4b3"></div>
<div class="a" style="left:1539px;top:100px;width:1px;height:726px;background:#98a4b3"></div>
<div class="a" style="left:1540px;top:101px;width:380px;height:25px;background:#c6d5e3"></div>
<div class="t" style="left:1543.7px;top:106.25px;font-size:15px;color:#1b2330;letter-spacing:-0.470px;">Call Stack</div>
<div class="a" style="left:1540px;top:126px;width:380px;height:700px;background:#fff;border-right:1px solid #a0a0a0;border-bottom:1px solid #a0a0a0"></div>
<div class="a" style="left:0px;top:850px;width:1920px;height:4px;background:#f6f7f9"></div>
<div class="a" style="left:0px;top:854px;width:1088px;height:1px;background:#98a4b3"></div>
<div class="a" style="left:0px;top:855px;width:1088px;height:24px;background:#c6d5e3"></div>
<div class="t" style="left:4.2px;top:860.25px;font-size:15px;color:#1b2330;letter-spacing:-0.632px;">Locals</div>
<div class="a" style="left:0px;top:879px;width:1088px;height:115px;background:#fff;border:1px solid #a0a0a0;border-top:none"></div>
<div class="a" style="left:1092px;top:854px;width:828px;height:1px;background:#98a4b3"></div>
<div class="a" style="left:1092px;top:854px;width:1px;height:140px;background:#98a4b3"></div>
<div class="a" style="left:1093px;top:855px;width:827px;height:24px;background:#c6d5e3"></div>
<div class="t" style="left:1096.6px;top:860.05px;font-size:15px;color:#1b2330;letter-spacing:0.054px;">Output</div>
<div class="a" style="left:1093px;top:879px;width:827px;height:115px;background:#fff;border-right:1px solid #a0a0a0;border-bottom:1px solid #a0a0a0"></div>
<div class="a" style="left:0px;top:1018px;width:1920px;height:1px;background:#d9d9d9"></div>
<div class="a" style="left:0px;top:1019px;width:1920px;height:21px;background:#f0f0f0"></div>
<div class="t" style="left:3.4px;top:1024px;font-size:12.5px;color:#1b1b1b;letter-spacing:-0.142px;">Album table</div>
<div class="a" style="left:0px;top:1040px;width:1920px;height:40px;background:#d5d5d5"></div>
<svg style="left:230px;top:100px" width="830" height="22"><defs><linearGradient id="tg" x1="0" y1="0" x2="0" y2="1"><stop offset="0" stop-color="#f7f9fc"/><stop offset="1" stop-color="#c8d8ea"/></linearGradient><linearGradient id="ta" x1="0" y1="0" x2="0" y2="1"><stop offset="0" stop-color="#fdfeff"/><stop offset="1" stop-color="#dcedfa"/></linearGradient></defs><path d="M10 20 L26 4 L119 4 Q121 4 121 6 L121 20 Z" fill="url(#tg)" stroke="#a9b6c6" stroke-width="1"/><path d="M122 20 L122 6 Q122 4 124 4 L220 4 Q222 4 222 6 L222 20 Z" fill="url(#tg)" stroke="#a9b6c6" stroke-width="1"/><path d="M223 20 L223 6 Q223 4 225 4 L313 4 Q315 4 315 6 L315 20 Z" fill="url(#tg)" stroke="#a9b6c6" stroke-width="1"/><path d="M316 20 L316 6 Q316 4 318 4 L418 4 Q420 4 420 6 L420 20 Z" fill="url(#tg)" stroke="#a9b6c6" stroke-width="1"/><path d="M421 20 L421 6 Q421 4 423 4 L515 4 L506 20 Z" fill="url(#tg)" stroke="#a9b6c6" stroke-width="1"/><path d="M634 20 L634 6 Q634 4 636 4 L816 4 Q818 4 818 6 L818 20 Z" fill="url(#tg)" stroke="#a9b6c6" stroke-width="1"/><path d="M503 21 L521 4 L631 4 Q633 4 633 6 L633 21 Z" fill="url(#ta)" stroke="#9fb4c8" stroke-width="1"/></svg>
<div class="t" style="left:257.3px;top:107px;font-size:11.8px;color:#1b2230;letter-spacing:-0.098px;">TestSelect.wo</div>
<svg style="left:338px;top:108px" width="9" height="8"><path d="M0.8 0.8L8 7.2M8 0.8L0.8 7.2" stroke="#111" stroke-width="1.6"/></svg>
<div class="t" style="left:358px;top:107px;font-size:11.8px;color:#1b2230;letter-spacing:-0.001px;">cWebList.pkg</div>
<svg style="left:438px;top:108px" width="9" height="8"><path d="M0.8 0.8L8 7.2M8 0.8L0.8 7.2" stroke="#111" stroke-width="1.6"/></svg>
<div class="t" style="left:458.6px;top:107px;font-size:11.8px;color:#1b2230;letter-spacing:-0.116px;">WebApp.src</div>
<svg style="left:531px;top:108px" width="9" height="8"><path d="M0.8 0.8L8 7.2M8 0.8L0.8 7.2" stroke="#111" stroke-width="1.6"/></svg>
<div class="t" style="left:551.2px;top:107px;font-size:11.8px;color:#1b2230;letter-spacing:-0.062px;">Dashboard.wo</div>
<svg style="left:636px;top:108px" width="9" height="8"><path d="M0.8 0.8L8 7.2M8 0.8L0.8 7.2" stroke="#111" stroke-width="1.6"/></svg>
<div class="t" style="left:656.4px;top:107px;font-size:11.8px;color:#1b2230;letter-spacing:0.038px;">Datadict.pkg</div>
<svg style="left:732px;top:108px" width="9" height="8"><path d="M0.8 0.8L8 7.2M8 0.8L0.8 7.2" stroke="#111" stroke-width="1.6"/></svg>
<div class="t" style="left:752.7px;top:107px;font-size:11.8px;color:#1b2230;letter-spacing:0.035px;">cWebObject.pkg</div>
<svg style="left:849px;top:108px" width="9" height="8"><path d="M0.8 0.8L8 7.2M8 0.8L0.8 7.2" stroke="#111" stroke-width="1.6"/></svg>
<div class="t" style="left:868.7px;top:107px;font-size:11.8px;color:#1b2230;letter-spacing:-0.043px;">vwDataFlexFind [Table Editor]</div>
<svg style="left:1034px;top:108px" width="9" height="8"><path d="M0.8 0.8L8 7.2M8 0.8L0.8 7.2" stroke="#111" stroke-width="1.6"/></svg>
<svg style="left:1482px;top:103px" width="52" height="14"><path d="M6 1.5V10.5L1.5 6Z" fill="none" stroke="#222" stroke-width="1.1"/><path d="M15.5 1.5V10.5L20 6Z" fill="none" stroke="#222" stroke-width="1.1"/><path d="M27 5H35L31 10Z" fill="#111"/><path d="M41.5 3.5L48.5 10M48.5 3.5L41.5 10" stroke="#111" stroke-width="1.6"/></svg>
<div class="a" style="left:1515px;top:123px;width:16px;height:706px;background:#f0f0f0"></div>
<div class="a" style="left:1515px;top:124px;width:15px;height:6px;background:#d2d2d2"></div>
<svg style="left:1517px;top:136px" width="12" height="8"><path d="M2 6L6 2L10 6" fill="none" stroke="#606060" stroke-width="1.8"/></svg>
<div class="a" style="left:1515px;top:212px;width:15px;height:24px;background:#cdcdcd"></div>
<svg style="left:1517px;top:817px" width="12" height="8"><path d="M2 2L6 6L10 2" fill="none" stroke="#606060" stroke-width="1.8"/></svg>
<div class="a" style="left:234px;top:829px;width:1281px;height:1px;background:#fff"></div>
<div class="a" style="left:235px;top:830px;width:1280px;height:15px;background:#f1f1f1"></div>
<div class="a" style="left:235px;top:830px;width:7px;height:15px;background:#d2d2d2"></div>
<svg style="left:245px;top:833px" width="8" height="10"><path d="M6 1L2 5L6 9" fill="none" stroke="#606060" stroke-width="1.8"/></svg>
<div class="a" style="left:259px;top:830px;width:443px;height:15px;background:#d5d5d5"></div>
<svg style="left:1501px;top:833px" width="8" height="10"><path d="M2 1L6 5L2 9" fill="none" stroke="#606060" stroke-width="1.8"/></svg>
<div class="a" style="left:1515px;top:829px;width:16px;height:17px;background:#f0f0f0"></div>
<svg style="left:0;top:155px" width="60" height="300"><path d="M13.5 17V281" stroke="#777" stroke-width="1" stroke-dasharray="1 1"/><path d="M18 12.5H22" stroke="#777" stroke-dasharray="1 1"/><path d="M18 30.5H22" stroke="#777" stroke-dasharray="1 1"/><path d="M18 48.5H22" stroke="#777" stroke-dasharray="1 1"/><path d="M18 66.5H22" stroke="#777" stroke-dasharray="1 1"/><path d="M18 84.5H22" stroke="#777" stroke-dasharray="1 1"/><path d="M18 102.5H22" stroke="#777" stroke-dasharray="1 1"/><path d="M18 120.5H22" stroke="#777" stroke-dasharray="1 1"/><path d="M18 138.5H22" stroke="#777" stroke-dasharray="1 1"/><path d="M18 156.5H22" stroke="#777" stroke-dasharray="1 1"/><path d="M18 174.5H22" stroke="#777" stroke-dasharray="1 1"/><path d="M18 192.5H22" stroke="#777" stroke-dasharray="1 1"/><path d="M18 210.5H22" stroke="#777" stroke-dasharray="1 1"/><path d="M18 228.5H22" stroke="#777" stroke-dasharray="1 1"/><path d="M18 246.5H22" stroke="#777" stroke-dasharray="1 1"/><path d="M18 264.5H22" stroke="#777" stroke-dasharray="1 1"/><path d="M18 282.5H22" stroke="#777" stroke-dasharray="1 1"/></svg>
<div class="a" style="left:40px;top:157px;width:40px;height:18px;background:#3399ff"></div>
<svg style="left:9px;top:162.5px" width="30" height="14"><rect x="0.5" y="0.5" width="8" height="8" fill="#f4f4f4" stroke="#9a9a9a"/><path d="M2.5 4.5H6.5M4.5 2.5V6.5" stroke="#333"/><g transform="translate(14,-2)"><rect x="0.5" y="0.5" width="13" height="12" fill="#fff" stroke="#6f86b8"/><rect x="1" y="1" width="12" height="3" fill="#7f9ed6"/><path d="M1 7.5H13M1 10.5H13M5.5 4V12M9.5 4V12" stroke="#a8bde0"/></g></svg>
<div class="t" style="left:42.6px;top:160px;font-size:12.3px;color:#fff;letter-spacing:0.085px;">Album</div>
<svg style="left:9px;top:180.5px" width="30" height="14"><rect x="0.5" y="0.5" width="8" height="8" fill="#f4f4f4" stroke="#9a9a9a"/><path d="M2.5 4.5H6.5M4.5 2.5V6.5" stroke="#333"/><g transform="translate(14,-2)"><rect x="0.5" y="0.5" width="13" height="12" fill="#fff" stroke="#6f86b8"/><rect x="1" y="1" width="12" height="3" fill="#7f9ed6"/><path d="M1 7.5H13M1 10.5H13M5.5 4V12M9.5 4V12" stroke="#a8bde0"/></g></svg>
<div class="t" style="left:42.6px;top:178px;font-size:12.3px;color:#1b1b1b;letter-spacing:-0.123px;">Artist</div>
<svg style="left:9px;top:198.5px" width="30" height="14"><rect x="0.5" y="0.5" width="8" height="8" fill="#f4f4f4" stroke="#9a9a9a"/><path d="M2.5 4.5H6.5M4.5 2.5V6.5" stroke="#333"/><g transform="translate(14,-2)"><rect x="0.5" y="0.5" width="13" height="12" fill="#fff" stroke="#6f86b8"/><rect x="1" y="1" width="12" height="3" fill="#7f9ed6"/><path d="M1 7.5H13M1 10.5H13M5.5 4V12M9.5 4V12" stroke="#a8bde0"/></g></svg>
<div class="t" style="left:42.6px;top:196px;font-size:12.3px;color:#1b1b1b;letter-spacing:-0.392px;">CodeMast</div>
<svg style="left:9px;top:216.5px" width="30" height="14"><rect x="0.5" y="0.5" width="8" height="8" fill="#f4f4f4" stroke="#9a9a9a"/><path d="M2.5 4.5H6.5M4.5 2.5V6.5" stroke="#333"/><g transform="translate(14,-2)"><rect x="0.5" y="0.5" width="13" height="12" fill="#fff" stroke="#6f86b8"/><rect x="1" y="1" width="12" height="3" fill="#7f9ed6"/><path d="M1 7.5H13M1 10.5H13M5.5 4V12M9.5 4V12" stroke="#a8bde0"/></g></svg>
<div class="t" style="left:42.6px;top:214px;font-size:12.3px;color:#1b1b1b;letter-spacing:-0.338px;">CodeType</div>
<svg style="left:9px;top:234.5px" width="30" height="14"><rect x="0.5" y="0.5" width="8" height="8" fill="#f4f4f4" stroke="#9a9a9a"/><path d="M2.5 4.5H6.5M4.5 2.5V6.5" stroke="#333"/><g transform="translate(14,-2)"><rect x="0.5" y="0.5" width="13" height="12" fill="#fff" stroke="#6f86b8"/><rect x="1" y="1" width="12" height="3" fill="#7f9ed6"/><path d="M1 7.5H13M1 10.5H13M5.5 4V12M9.5 4V12" stroke="#a8bde0"/></g></svg>
<div class="t" style="left:42.6px;top:232px;font-size:12.3px;color:#1b1b1b;letter-spacing:-0.273px;">Customer</div>
<svg style="left:9px;top:252.5px" width="30" height="14"><rect x="0.5" y="0.5" width="8" height="8" fill="#f4f4f4" stroke="#9a9a9a"/><path d="M2.5 4.5H6.5M4.5 2.5V6.5" stroke="#333"/><g transform="translate(14,-2)"><rect x="0.5" y="0.5" width="13" height="12" fill="#fff" stroke="#6f86b8"/><rect x="1" y="1" width="12" height="3" fill="#7f9ed6"/><path d="M1 7.5H13M1 10.5H13M5.5 4V12M9.5 4V12" stroke="#a8bde0"/></g></svg>
<div class="t" style="left:42.6px;top:250px;font-size:12.3px;color:#1b1b1b;letter-spacing:-0.470px;">Employee</div>
<svg style="left:9px;top:270.5px" width="30" height="14"><rect x="0.5" y="0.5" width="8" height="8" fill="#f4f4f4" stroke="#9a9a9a"/><path d="M2.5 4.5H6.5M4.5 2.5V6.5" stroke="#333"/><g transform="translate(14,-2)"><rect x="0.5" y="0.5" width="13" height="12" fill="#fff" stroke="#6f86b8"/><rect x="1" y="1" width="12" height="3" fill="#7f9ed6"/><path d="M1 7.5H13M1 10.5H13M5.5 4V12M9.5 4V12" stroke="#a8bde0"/></g></svg>
<div class="t" style="left:42.6px;top:268px;font-size:12.3px;color:#1b1b1b;letter-spacing:-0.947px;">Genre</div>
<svg style="left:9px;top:288.5px" width="30" height="14"><rect x="0.5" y="0.5" width="8" height="8" fill="#f4f4f4" stroke="#9a9a9a"/><path d="M2.5 4.5H6.5M4.5 2.5V6.5" stroke="#333"/><g transform="translate(14,-2)"><rect x="0.5" y="0.5" width="13" height="12" fill="#fff" stroke="#6f86b8"/><rect x="1" y="1" width="12" height="3" fill="#7f9ed6"/><path d="M1 7.5H13M1 10.5H13M5.5 4V12M9.5 4V12" stroke="#a8bde0"/></g></svg>
<div class="t" style="left:42.6px;top:286px;font-size:12.3px;color:#1b1b1b;letter-spacing:-0.261px;">Invoice</div>
<svg style="left:9px;top:306.5px" width="30" height="14"><rect x="0.5" y="0.5" width="8" height="8" fill="#f4f4f4" stroke="#9a9a9a"/><path d="M2.5 4.5H6.5M4.5 2.5V6.5" stroke="#333"/><g transform="translate(14,-2)"><rect x="0.5" y="0.5" width="13" height="12" fill="#fff" stroke="#6f86b8"/><rect x="1" y="1" width="12" height="3" fill="#7f9ed6"/><path d="M1 7.5H13M1 10.5H13M5.5 4V12M9.5 4V12" stroke="#a8bde0"/></g></svg>
<div class="t" style="left:42.6px;top:304px;font-size:12.3px;color:#1b1b1b;letter-spacing:-0.292px;">InvoiceLine</div>
<svg style="left:9px;top:324.5px" width="30" height="14"><rect x="0.5" y="0.5" width="8" height="8" fill="#f4f4f4" stroke="#9a9a9a"/><path d="M2.5 4.5H6.5M4.5 2.5V6.5" stroke="#333"/><g transform="translate(14,-2)"><rect x="0.5" y="0.5" width="13" height="12" fill="#fff" stroke="#6f86b8"/><rect x="1" y="1" width="12" height="3" fill="#7f9ed6"/><path d="M1 7.5H13M1 10.5H13M5.5 4V12M9.5 4V12" stroke="#a8bde0"/></g></svg>
<div class="t" style="left:42.6px;top:322px;font-size:12.3px;color:#1b1b1b;letter-spacing:-0.220px;">MediaType</div>
<svg style="left:9px;top:342.5px" width="30" height="14"><rect x="0.5" y="0.5" width="8" height="8" fill="#f4f4f4" stroke="#9a9a9a"/><path d="M2.5 4.5H6.5M4.5 2.5V6.5" stroke="#333"/><g transform="translate(14,-2)"><rect x="0.5" y="0.5" width="13" height="12" fill="#fff" stroke="#6f86b8"/><rect x="1" y="1" width="12" height="3" fill="#7f9ed6"/><path d="M1 7.5H13M1 10.5H13M5.5 4V12M9.5 4V12" stroke="#a8bde0"/></g></svg>
<div class="t" style="left:42.6px;top:340px;font-size:12.3px;color:#1b1b1b;letter-spacing:-0.408px;">Playlist</div>
<svg style="left:9px;top:360.5px" width="30" height="14"><rect x="0.5" y="0.5" width="8" height="8" fill="#f4f4f4" stroke="#9a9a9a"/><path d="M2.5 4.5H6.5M4.5 2.5V6.5" stroke="#333"/><g transform="translate(14,-2)"><rect x="0.5" y="0.5" width="13" height="12" fill="#fff" stroke="#6f86b8"/><rect x="1" y="1" width="12" height="3" fill="#7f9ed6"/><path d="M1 7.5H13M1 10.5H13M5.5 4V12M9.5 4V12" stroke="#a8bde0"/></g></svg>
<div class="t" style="left:42.6px;top:358px;font-size:12.3px;color:#1b1b1b;letter-spacing:-0.321px;">PlaylistTrack</div>
<svg style="left:9px;top:378.5px" width="30" height="14"><rect x="0.5" y="0.5" width="8" height="8" fill="#f4f4f4" stroke="#9a9a9a"/><path d="M2.5 4.5H6.5M4.5 2.5V6.5" stroke="#333"/><g transform="translate(14,-2)"><rect x="0.5" y="0.5" width="13" height="12" fill="#fff" stroke="#6f86b8"/><rect x="1" y="1" width="12" height="3" fill="#7f9ed6"/><path d="M1 7.5H13M1 10.5H13M5.5 4V12M9.5 4V12" stroke="#a8bde0"/></g></svg>
<div class="t" style="left:42.6px;top:376px;font-size:12.3px;color:#1b1b1b;letter-spacing:-0.474px;">Track</div>
<svg style="left:9px;top:396.5px" width="30" height="14"><rect x="0.5" y="0.5" width="8" height="8" fill="#f4f4f4" stroke="#9a9a9a"/><path d="M2.5 4.5H6.5M4.5 2.5V6.5" stroke="#333"/><g transform="translate(14,-2)"><rect x="0.5" y="0.5" width="13" height="12" fill="#fff" stroke="#6f86b8"/><rect x="1" y="1" width="12" height="3" fill="#7f9ed6"/><path d="M1 7.5H13M1 10.5H13M5.5 4V12M9.5 4V12" stroke="#a8bde0"/></g></svg>
<div class="t" style="left:42.6px;top:394px;font-size:12.3px;color:#1b1b1b;letter-spacing:-0.558px;">vwDataFlexFind</div>
<svg style="left:9px;top:414.5px" width="30" height="14"><rect x="0.5" y="0.5" width="8" height="8" fill="#f4f4f4" stroke="#9a9a9a"/><path d="M2.5 4.5H6.5M4.5 2.5V6.5" stroke="#333"/><g transform="translate(14,-2)"><rect x="0.5" y="0.5" width="13" height="12" fill="#fff" stroke="#6f86b8"/><rect x="1" y="1" width="12" height="3" fill="#7f9ed6"/><path d="M1 7.5H13M1 10.5H13M5.5 4V12M9.5 4V12" stroke="#a8bde0"/></g></svg>
<div class="t" style="left:42.6px;top:412px;font-size:12.3px;color:#1b1b1b;letter-spacing:-0.567px;">WebAppSession</div>
<svg style="left:9px;top:432.5px" width="30" height="14"><rect x="0.5" y="0.5" width="8" height="8" fill="#f4f4f4" stroke="#9a9a9a"/><path d="M2.5 4.5H6.5M4.5 2.5V6.5" stroke="#333"/><g transform="translate(14,-2)"><rect x="0.5" y="0.5" width="13" height="12" fill="#fff" stroke="#6f86b8"/><rect x="1" y="1" width="12" height="3" fill="#7f9ed6"/><path d="M1 7.5H13M1 10.5H13M5.5 4V12M9.5 4V12" stroke="#a8bde0"/></g></svg>
<div class="t" style="left:42.6px;top:430px;font-size:12.3px;color:#1b1b1b;letter-spacing:-0.501px;">WebAppUser</div>
<svg style="left:7px;top:130px" width="16" height="16" viewBox="0 0 16 16"><rect x="1.5" y="2.5" width="14" height="12" fill="#fff" stroke="#5a74b0"/><rect x="2" y="3" width="13" height="3" fill="#7f9ed6"/><path d="M2 9.5H15M2 12H15M6.5 6V14M10.5 6V14" stroke="#a8bde0"/><path d="M0 1H4M2 -1V3M0 -1L4 3M4 -1L0 3" stroke="#f2d54a" stroke-width="0.9"/></svg>
<svg style="left:30px;top:130px" width="16" height="17" viewBox="0 0 16 17"><rect x="0.5" y="1.5" width="13" height="12" fill="#fff" stroke="#5a74b0"/><rect x="1" y="2" width="12" height="3" fill="#7f9ed6"/><path d="M1 8.5H13M1 11H13M5.5 5V13M9.5 5V13" stroke="#a8bde0"/><path d="M8 9L14 15M14 9L8 15" stroke="#e02a2a" stroke-width="2"/></svg>
<div class="a" style="left:51px;top:130px;width:1px;height:16px;background:#b4bbcc;box-shadow:1px 0 0 #fff"></div>
<svg style="left:57px;top:130px" width="17" height="16" viewBox="0 0 17 16"><rect x="0.5" y="4.5" width="12" height="10" fill="#fff" stroke="#5a74b0"/><rect x="1" y="5" width="11" height="2.5" fill="#7f9ed6"/><path d="M2 10H8M2 12.5H8" stroke="#8aa3d0"/><path d="M7 12L15 3L17 5L9 14L6 15Z" fill="#f0c850" stroke="#8a6a30" stroke-width="0.8"/></svg>
<svg style="left:79px;top:130px" width="16" height="17" viewBox="0 0 16 17"><rect x="0.5" y="0.5" width="13" height="11" fill="#f2f4f8" stroke="#8a94a8"/><path d="M1 4.5H13M1 8H13M5 1V11M9 1V11" stroke="#b8c0d0"/><circle cx="9" cy="9" r="3.5" fill="#eef6fc" fill-opacity="0.8" stroke="#8a94a8"/><path d="M11.5 11.5L15 15" stroke="#8a94a8" stroke-width="1.5"/></svg>
<div class="a" style="left:100px;top:130px;width:1px;height:16px;background:#b4bbcc;box-shadow:1px 0 0 #fff"></div>
<svg style="left:107px;top:130px" width="17" height="17" viewBox="0 0 17 17"><rect x="3.5" y="0.5" width="8" height="11" fill="#fff" stroke="#7a84a0"/><path d="M5 3H10M5 5H10M5 7H10" stroke="#9aa"/><rect x="7.5" y="5.5" width="8" height="11" fill="#fff" stroke="#7a84a0"/><path d="M9 8H14M9 10H14M9 12H14" stroke="#9aa"/><path d="M2 6Q0 10 3 13" stroke="#4a80d0" stroke-width="1.6" fill="none"/><path d="M13 4Q14 1 11 0" stroke="#4a80d0" stroke-width="1.6" fill="none"/></svg>
<div class="a" style="left:129px;top:130px;width:1px;height:16px;background:#b4bbcc;box-shadow:1px 0 0 #fff"></div>
<div class="a" style="left:132px;top:127px;width:22px;height:22px;border:1px solid #7ba6cf;background:#e8f2fb"></div>
<svg style="left:135px;top:129px" width="18" height="18" viewBox="0 0 18 18"><text x="1" y="8" font-family="Liberation Serif" font-weight="bold" font-size="9" fill="#3a4aa0">A</text><text x="1" y="16" font-family="Liberation Serif" font-weight="bold" font-size="9" fill="#a03a50">Z</text><path d="M13 1V14M10.5 11L13 15L15.5 11" stroke="#111" stroke-width="1.3" fill="none"/></svg>
<svg style="left:158px;top:132px" width="15" height="13" viewBox="0 0 15 13"><path d="M0.5 0.5H14.5L9 6.5V12L6 10V6.5Z" fill="#8a8a8a" stroke="#333"/><path d="M2 1.5H13" stroke="#ddd"/></svg>
<div class="a" style="left:0px;top:826px;width:227px;height:22px;background:#f4f5f7"></div>
<svg style="left:0px;top:826px" width="227" height="24" viewBox="0 0 227 24"><path d="M122.5 2V18Q122.5 21.5 126 21.5H220Q223.5 21.5 223.5 18V2" fill="#fff" stroke="#a0a0a0"/></svg>
<svg style="left:7px;top:830px" width="17" height="15" viewBox="0 0 17 15"><rect x="0.5" y="1.5" width="12" height="9" fill="#fff" stroke="#5b6a8f"/><path d="M2 6L6 2L10 6L6 10Z" fill="#f0c040" stroke="#b0861c"/><path d="M10 7L13 4L16 7L13 10Z" fill="#e070d0"/><path d="M7 12L10 9L13 12L10 15Z" fill="#6ea8e8"/></svg>
<div class="t" style="left:26.7px;top:832px;font-size:12.3px;color:#8a8a8a;letter-spacing:-0.475px;">Code Explorer (...</div>
<svg style="left:126px;top:830px" width="16" height="15" viewBox="0 0 16 15"><rect x="0.5" y="0.5" width="7" height="10" rx="2" fill="#f0d070" stroke="#b08a30"/><rect x="3.5" y="4.5" width="12" height="10" fill="#fff" stroke="#4c6aa8"/><rect x="4" y="5" width="11" height="2.5" fill="#6f95d8"/><path d="M4 10H15M4 12.5H15M8 7.5V14M11.5 7.5V14" stroke="#8aa3d0"/></svg>
<div class="t" style="left:145.8px;top:832px;font-size:12.3px;color:#1b1b1b;letter-spacing:-0.431px;">Table Explorer</div>
<div class="a" style="left:161px;top:861px;width:86px;height:19px;background:#cdd8e4;box-shadow:2px 2px 1px rgba(0,0,0,0.30)"></div>
<div class="t" style="left:167px;top:865px;font-size:12.3px;color:#cdd6e0;letter-spacing:-0.508px;">Table Explorer</div>
<svg style="left:151px;top:827px" width="23" height="23" viewBox="0 0 23 23"><circle cx="11.3" cy="11.6" r="8.5" fill="#fff" fill-opacity="0.25" stroke="#9a9a9a" stroke-opacity="0.35" stroke-width="2.2"/></svg>
<svg style="left:161px;top:839px" width="15" height="22" viewBox="0 0 15 22"><path d="M1 1V17L5 13L7.8 19.5L10.5 18.3L7.8 12H13Z" fill="#fff" stroke="#111" stroke-width="1"/></svg>
<svg style="left:199px;top:108px" width="8" height="11" viewBox="0 0 8 11"><path d="M1.5 0.5H6.5M2.5 0.5V5.5M5.5 0.5V5.5M0.5 5.5H7.5M4 5.5V10" stroke="#111" stroke-width="1.2" fill="none"/><rect x="4" y="1" width="1.5" height="4.5" fill="#111"/></svg>
<svg style="left:213px;top:109px" width="9" height="8" viewBox="0 0 9 8"><path d="M0.8 0.8L8 7.2M8 0.8L0.8 7.2" stroke="#111" stroke-width="1.6"/></svg>
<svg style="left:1893px;top:108px" width="8" height="11" viewBox="0 0 8 11"><path d="M1.5 0.5H6.5M2.5 0.5V5.5M5.5 0.5V5.5M0.5 5.5H7.5M4 5.5V10" stroke="#111" stroke-width="1.2" fill="none"/><rect x="4" y="1" width="1.5" height="4.5" fill="#111"/></svg>
<svg style="left:1907px;top:109px" width="9" height="8" viewBox="0 0 9 8"><path d="M0.8 0.8L8 7.2M8 0.8L0.8 7.2" stroke="#111" stroke-width="1.6"/></svg>
<svg style="left:1061px;top:862px" width="8" height="11" viewBox="0 0 8 11"><path d="M1.5 0.5H6.5M2.5 0.5V5.5M5.5 0.5V5.5M0.5 5.5H7.5M4 5.5V10" stroke="#111" stroke-width="1.2" fill="none"/><rect x="4" y="1" width="1.5" height="4.5" fill="#111"/></svg>
<svg style="left:1075px;top:863px" width="9" height="8" viewBox="0 0 9 8"><path d="M0.8 0.8L8 7.2M8 0.8L0.8 7.2" stroke="#111" stroke-width="1.6"/></svg>
<svg style="left:1893px;top:862px" width="8" height="11" viewBox="0 0 8 11"><path d="M1.5 0.5H6.5M2.5 0.5V5.5M5.5 0.5V5.5M0.5 5.5H7.5M4 5.5V10" stroke="#111" stroke-width="1.2" fill="none"/><rect x="4" y="1" width="1.5" height="4.5" fill="#111"/></svg>
<svg style="left:1907px;top:863px" width="9" height="8" viewBox="0 0 9 8"><path d="M0.8 0.8L8 7.2M8 0.8L0.8 7.2" stroke="#111" stroke-width="1.6"/></svg>
<div class="a" style="left:1540px;top:126px;width:379px;height:24px;background:#fff"></div>
<div class="t" style="left:1547.5px;top:133px;font-size:12.3px;color:#1b1b1b;letter-spacing:-0.734px;">Message</div>
<div class="t" style="left:1795.6px;top:133px;font-size:12.3px;color:#1b1b1b;letter-spacing:-0.229px;">Object</div>
<div class="a" style="left:1788px;top:128px;width:1px;height:680px;background:#ececec"></div>
<div class="a" style="left:1542px;top:150px;width:376px;height:1px;background:#ededed"></div>
<div class="a" style="left:1542px;top:169px;width:376px;height:1px;background:#ededed"></div>
<div class="a" style="left:1542px;top:188px;width:376px;height:1px;background:#ededed"></div>
<div class="a" style="left:1542px;top:207px;width:376px;height:1px;background:#ededed"></div>
<div class="a" style="left:1542px;top:226px;width:376px;height:1px;background:#ededed"></div>
<div class="a" style="left:1542px;top:245px;width:376px;height:1px;background:#ededed"></div>
<div class="a" style="left:1542px;top:264px;width:376px;height:1px;background:#ededed"></div>
<div class="a" style="left:1542px;top:283px;width:376px;height:1px;background:#ededed"></div>
<div class="a" style="left:1542px;top:302px;width:376px;height:1px;background:#ededed"></div>
<div class="a" style="left:1542px;top:321px;width:376px;height:1px;background:#ededed"></div>
<div class="a" style="left:1542px;top:340px;width:376px;height:1px;background:#ededed"></div>
<div class="a" style="left:1542px;top:359px;width:376px;height:1px;background:#ededed"></div>
<div class="a" style="left:1542px;top:378px;width:376px;height:1px;background:#ededed"></div>
<div class="a" style="left:1542px;top:397px;width:376px;height:1px;background:#ededed"></div>
<div class="a" style="left:1542px;top:416px;width:376px;height:1px;background:#ededed"></div>
<div class="a" style="left:1542px;top:435px;width:376px;height:1px;background:#ededed"></div>
<div class="a" style="left:1542px;top:454px;width:376px;height:1px;background:#ededed"></div>
<div class="a" style="left:1542px;top:473px;width:376px;height:1px;background:#ededed"></div>
<div class="a" style="left:1542px;top:492px;width:376px;height:1px;background:#ededed"></div>
<div class="a" style="left:1542px;top:511px;width:376px;height:1px;background:#ededed"></div>
<div class="a" style="left:1542px;top:530px;width:376px;height:1px;background:#ededed"></div>
<div class="a" style="left:1542px;top:549px;width:376px;height:1px;background:#ededed"></div>
<div class="a" style="left:1542px;top:568px;width:376px;height:1px;background:#ededed"></div>
<div class="a" style="left:1542px;top:587px;width:376px;height:1px;background:#ededed"></div>
<div class="a" style="left:1542px;top:606px;width:376px;height:1px;background:#ededed"></div>
<div class="a" style="left:1542px;top:625px;width:376px;height:1px;background:#ededed"></div>
<div class="a" style="left:1542px;top:644px;width:376px;height:1px;background:#ededed"></div>
<div class="a" style="left:1542px;top:663px;width:376px;height:1px;background:#ededed"></div>
<div class="a" style="left:1542px;top:682px;width:376px;height:1px;background:#ededed"></div>
<div class="a" style="left:1542px;top:701px;width:376px;height:1px;background:#ededed"></div>
<div class="a" style="left:1542px;top:720px;width:376px;height:1px;background:#ededed"></div>
<div class="a" style="left:1542px;top:739px;width:376px;height:1px;background:#ededed"></div>
<div class="a" style="left:1542px;top:758px;width:376px;height:1px;background:#ededed"></div>
<div class="a" style="left:1542px;top:777px;width:376px;height:1px;background:#ededed"></div>
<div class="a" style="left:1542px;top:796px;width:376px;height:1px;background:#ededed"></div>
<div class="a" style="left:1541px;top:807px;width:378px;height:16px;background:#f0f0f0"></div>
<div class="a" style="left:1558px;top:808px;width:323px;height:15px;background:#d5d5d5"></div>
<svg style="left:1545px;top:810px" width="8" height="10" viewBox="0 0 8 10"><path d="M6 1L2 5L6 9" fill="none" stroke="#606060" stroke-width="1.8"/></svg>
<svg style="left:1906px;top:810px" width="8" height="10" viewBox="0 0 8 10"><path d="M2 1L6 5L2 9" fill="none" stroke="#606060" stroke-width="1.8"/></svg>
<div class="a" style="left:1540px;top:826px;width:380px;height:22px;background:#f4f5f7"></div>
<svg style="left:1540px;top:826px" width="100" height="24" viewBox="0 0 100 24"><path d="M2.5 2V18Q2.5 21.5 6 21.5H78Q81.5 21.5 81.5 18V2" fill="#fff" stroke="#a0a0a0"/></svg>
<svg style="left:1546px;top:830px" width="16" height="16" viewBox="0 0 16 16"><rect x="0.5" y="0.5" width="12" height="11" fill="#fff" stroke="#3d5a8f"/><rect x="1" y="1" width="11" height="2.5" fill="#6f95d8"/><path d="M2 5.5H10M2 7.5H10M2 9.5H6" stroke="#6080b0"/><rect x="5.5" y="6.5" width="7" height="9" fill="#e8eefa" stroke="#4a5a80"/><path d="M14 9V14M12 12L14 15L16 12" stroke="#1a2a8a" stroke-width="1.4" fill="none"/></svg>
<div class="t" style="left:1565.7px;top:832px;font-size:12.3px;color:#1b1b1b;letter-spacing:-0.562px;">Call Stack</div>
<svg style="left:1625px;top:830px" width="17" height="16" viewBox="0 0 17 16"><rect x="0.5" y="5.5" width="12" height="10" fill="#fff" stroke="#5a6a8a"/><path d="M2 10H10M2 13H10" stroke="#5a6a8a"/><path d="M5 6L10 1L15 5L10 9Z" fill="#f0c040" stroke="#a07820"/><path d="M13 1L16 3L13 6Z" fill="#4ca84c"/></svg>
<div class="t" style="left:1644.5px;top:832px;font-size:12.3px;color:#8a8a8a;letter-spacing:-0.310px;">Properties (Read-only)</div>
<div class="t" style="left:6.2px;top:883px;font-size:12.3px;color:#1b1b1b;letter-spacing:-0.337px;">Name</div>
<div class="t" style="left:156px;top:883px;font-size:12.3px;color:#1b1b1b;letter-spacing:-0.387px;">Value</div>
<div class="a" style="left:149px;top:881px;width:1px;height:112px;background:#ececec"></div>
<div class="a" style="left:984px;top:881px;width:1px;height:112px;background:#ececec"></div>
<div class="a" style="left:1px;top:899px;width:1086px;height:1px;background:#a0a0a0"></div>
<div class="a" style="left:0px;top:994px;width:1088px;height:24px;background:#f4f5f7"></div>
<div class="a" style="left:0px;top:996px;width:1088px;height:1px;background:#d5d5d5"></div>
<svg style="left:0px;top:994px" width="140" height="24" viewBox="0 0 140 24"><path d="M69.5 2V18Q69.5 21.5 73 21.5H126Q129.5 21.5 129.5 18V2" fill="#fff" stroke="#a0a0a0"/></svg>
<svg style="left:7px;top:999px" width="16" height="16" viewBox="0 0 16 16"><rect x="0.5" y="0.5" width="15" height="14" fill="#fff" stroke="#3d5a8f"/><rect x="1" y="1" width="14" height="2" fill="#6f95d8"/><circle cx="8" cy="8.5" r="4.5" fill="#3aa86a" stroke="#1a6a9a"/></svg>
<div class="t" style="left:26px;top:1000px;font-size:12.3px;color:#8a8a8a;letter-spacing:-0.501px;">Globals</div>
<svg style="left:74px;top:999px" width="16" height="16" viewBox="0 0 16 16"><rect x="0.5" y="0.5" width="15" height="14" fill="#fff" stroke="#3d5a8f"/><rect x="1" y="1" width="14" height="2" fill="#6f95d8"/><path d="M4 10L8.5 4L12 7.5L7.5 13Z" fill="#3a78d8" stroke="#1a3a8a"/></svg>
<div class="t" style="left:92.8px;top:1000px;font-size:12.3px;color:#1b1b1b;letter-spacing:-0.529px;">Locals</div>
<div class="a" style="left:1094px;top:881px;width:825px;height:112px;background:#fff"></div>
<svg style="left:1098px;top:880px" width="40" height="75" viewBox="0 0 40 75"><path d="M7.5 16V62" stroke="#555" stroke-dasharray="1 1"/><path d="M12 11.5H15M22.5 17V29M23 29.5H29M8 47.5H14M12 65.5H15" stroke="#555" stroke-dasharray="1 1"/><rect x="3.5" y="7.5" width="8" height="8" fill="#f4f4f4" stroke="#9a9a9a"/><path d="M5.5 11.5H9.5" stroke="#333"/><rect x="3.5" y="61.5" width="8" height="8" fill="#f4f4f4" stroke="#9a9a9a"/><path d="M5.5 65.5H9.5M7.5 63.5V67.5" stroke="#333"/><defs><linearGradient id="sq" x1="0" y1="0" x2="1" y2="1"><stop offset="0" stop-color="#9ab8ee"/><stop offset="1" stop-color="#3a64c0"/></linearGradient></defs><rect x="18" y="42.5" width="9" height="9" fill="url(#sq)"/><path d="M20 58.5V70L26 64.2Z" fill="#3a70d8"/></svg>
<svg style="left:1114px;top:882px" width="16" height="16" viewBox="0 0 16 16"><path d="M1 10L8 6L15 10L8 14Z" fill="#e8f0fc" stroke="#6a8ac8"/><path d="M1 8L8 4L15 8L8 12Z" fill="#dfe8fa" stroke="#6a8ac8"/><path d="M6 0H10V4H12L8 8L4 4H6Z" fill="#3a70d8"/></svg>
<div class="t" style="left:1134.4px;top:884px;font-size:12.3px;color:#1b1b1b;letter-spacing:0.148px;">----Compiling WebApp.src----</div>
<svg style="left:1134px;top:904px" width="6" height="9" viewBox="0 0 6 9"><path d="M0.5 0.5V8.5L5 4.5Z" fill="#fff" stroke="#aaa"/></svg>
<div class="t" style="left:1149.4px;top:902px;font-size:12.3px;color:#1b1b1b;letter-spacing:-0.149px;">No changes detected, skipping compile</div>
<div class="t" style="left:1134.4px;top:920px;font-size:12.3px;color:#1b1b1b;letter-spacing:0.123px;">----Compile Finished----</div>
<div class="a" style="left:1132px;top:935px;width:204px;height:18px;background:#efefef"></div>
<div class="t" style="left:1134.4px;top:938px;font-size:12.3px;color:#1b1b1b;letter-spacing:0.023px;">----Loading Program In Debugger----</div>
<div class="a" style="left:1093px;top:994px;width:827px;height:24px;background:#f4f5f7"></div>
<div class="a" style="left:1093px;top:996px;width:827px;height:1px;background:#d5d5d5"></div>
<svg style="left:1093px;top:994px" width="70" height="24" viewBox="0 0 70 24"><path d="M1.5 2V18Q1.5 21.5 5 21.5H63Q66.5 21.5 66.5 18V2" fill="#fff" stroke="#a0a0a0"/></svg>
<svg style="left:1100px;top:1001px" width="14" height="16" viewBox="0 0 14 16"><rect x="0.5" y="0.5" width="13" height="14" fill="#fff" stroke="#3d5a8f"/><rect x="1" y="1" width="12" height="2" fill="#6f95d8"/><path d="M2.5 5.5H11.5M2.5 7.5H11.5M2.5 9.5H11.5M2.5 11.5H11.5" stroke="#445"/></svg>
<div class="t" style="left:1118.4px;top:1000px;font-size:12.3px;color:#1b1b1b;letter-spacing:-0.064px;">Output</div>
<svg style="left:1165px;top:1001px" width="16" height="16" viewBox="0 0 16 16"><rect x="0.5" y="0.5" width="13" height="11" fill="#fff" stroke="#3d5a8f"/><rect x="1" y="1" width="12" height="2" fill="#6f95d8"/><path d="M6 15Q3 13 3 10L4 8L6 10V5.5Q6 4.5 7 5V9V4Q8 3.5 8.5 4V9V4.5Q9.5 4 10 5V9.5V6Q11 5.5 11.5 6.5V11Q11 15 8 15Z" fill="#f6d06a" stroke="#b08a30" stroke-width="0.8"/></svg>
<div class="t" style="left:1184.4px;top:1000px;font-size:12.3px;color:#8a8a8a;letter-spacing:-0.344px;">Breakpoints</div>
<div class="a" style="left:1250px;top:1002px;width:1px;height:13px;background:#c8c8c8"></div>
<svg style="left:1255px;top:1001px" width="16" height="16" viewBox="0 0 16 16"><rect x="3.5" y="0.5" width="12" height="11" fill="#fff" stroke="#3d5a8f"/><rect x="4" y="1" width="11" height="2.5" fill="#6f95d8"/><path d="M6 5.5H13M6 7.5H13M6 9.5H13" stroke="#6080b0"/><circle cx="3" cy="13" r="2.2" fill="none" stroke="#222" stroke-width="1.2"/><circle cx="8" cy="13" r="2.2" fill="none" stroke="#222" stroke-width="1.2"/></svg>
<div class="t" style="left:1274px;top:1000px;font-size:12.3px;color:#8a8a8a;letter-spacing:-0.398px;">Watches</div>
<div class="a" style="left:1323px;top:1002px;width:1px;height:13px;background:#c8c8c8"></div>
<svg style="left:1328px;top:1001px" width="16" height="16" viewBox="0 0 16 16"><rect x="3.5" y="0.5" width="12" height="11" fill="#f6f8fc" stroke="#3d5a8f"/><rect x="4" y="1" width="11" height="2.5" fill="#6f95d8"/><path d="M4 6.5H15M4 9H15M8 3.5V11.5M11.5 3.5V11.5" stroke="#8aa3d0"/><circle cx="3" cy="13" r="2.2" fill="none" stroke="#222" stroke-width="1.2"/><circle cx="8" cy="13" r="2.2" fill="none" stroke="#222" stroke-width="1.2"/></svg>
<div class="t" style="left:1347.3px;top:1000px;font-size:12.3px;color:#8a8a8a;letter-spacing:-0.409px;">Tables</div>
<div class="a" style="left:1387px;top:1020px;width:1px;height:20px;background:#dcdcdc"></div>
<div class="a" style="left:1501px;top:1020px;width:1px;height:20px;background:#dcdcdc"></div>
<div class="a" style="left:1655px;top:1020px;width:1px;height:20px;background:#dcdcdc"></div>
<div class="a" style="left:1689px;top:1020px;width:1px;height:20px;background:#dcdcdc"></div>
<div class="a" style="left:1723px;top:1020px;width:1px;height:20px;background:#dcdcdc"></div>
<div class="a" style="left:1757px;top:1020px;width:1px;height:20px;background:#dcdcdc"></div>
<div class="a" style="left:1811px;top:1020px;width:1px;height:20px;background:#dcdcdc"></div>
<div class="a" style="left:1865px;top:1020px;width:1px;height:20px;background:#dcdcdc"></div>
<svg style="left:1661px;top:1023px" width="15" height="14" viewBox="0 0 15 14"><circle cx="7.5" cy="7" r="6.2" fill="#fff" stroke="#c0282e" stroke-width="1.3"/><path d="M7.5 3V8.5" stroke="#c0282e" stroke-width="1.8"/><circle cx="7.5" cy="10.6" r="1" fill="#c0282e"/></svg>
<div class="t" style="left:1817.5px;top:1024px;font-size:12.3px;color:#8a8a8a;letter-spacing:-1.667px;">CAPS</div>
<div class="t" style="left:1870.8px;top:1024px;font-size:12.3px;color:#111;letter-spacing:-0.058px;">NUM</div>
<div class="a" style="left:0px;top:1040px;width:1920px;height:1px;background:#c4c4c4"></div>
<svg style="left:10px;top:1047px" width="28" height="27" viewBox="0 0 28 27"><path d="M0 3.5L11 2V12.5H0Z M12.5 1.8L27 0V12.5H12.5Z M0 14H11V24.5L0 23Z M12.5 14H27V27L12.5 25Z" fill="#fff"/></svg>
<svg style="left:50px;top:1045px" width="9" height="30" viewBox="0 0 9 30"><rect x="0" y="0" width="1.3" height="1.3" fill="#6e6e6e"/><rect x="3" y="0" width="1.3" height="1.3" fill="#6e6e6e"/><rect x="6" y="0" width="1.3" height="1.3" fill="#6e6e6e"/><rect x="0" y="3" width="1.3" height="1.3" fill="#6e6e6e"/><rect x="3" y="3" width="1.3" height="1.3" fill="#6e6e6e"/><rect x="6" y="3" width="1.3" height="1.3" fill="#6e6e6e"/><rect x="0" y="6" width="1.3" height="1.3" fill="#6e6e6e"/><rect x="3" y="6" width="1.3" height="1.3" fill="#6e6e6e"/><rect x="6" y="6" width="1.3" height="1.3" fill="#6e6e6e"/><rect x="0" y="9" width="1.3" height="1.3" fill="#6e6e6e"/><rect x="3" y="9" width="1.3" height="1.3" fill="#6e6e6e"/><rect x="6" y="9" width="1.3" height="1.3" fill="#6e6e6e"/><rect x="0" y="12" width="1.3" height="1.3" fill="#6e6e6e"/><rect x="3" y="12" width="1.3" height="1.3" fill="#6e6e6e"/><rect x="6" y="12" width="1.3" height="1.3" fill="#6e6e6e"/><rect x="0" y="15" width="1.3" height="1.3" fill="#6e6e6e"/><rect x="3" y="15" width="1.3" height="1.3" fill="#6e6e6e"/><rect x="6" y="15" width="1.3" height="1.3" fill="#6e6e6e"/><rect x="0" y="18" width="1.3" height="1.3" fill="#6e6e6e"/><rect x="3" y="18" width="1.3" height="1.3" fill="#6e6e6e"/><rect x="6" y="18" width="1.3" height="1.3" fill="#6e6e6e"/><rect x="0" y="21" width="1.3" height="1.3" fill="#6e6e6e"/><rect x="3" y="21" width="1.3" height="1.3" fill="#6e6e6e"/><rect x="6" y="21" width="1.3" height="1.3" fill="#6e6e6e"/><rect x="0" y="24" width="1.3" height="1.3" fill="#6e6e6e"/><rect x="3" y="24" width="1.3" height="1.3" fill="#6e6e6e"/><rect x="6" y="24" width="1.3" height="1.3" fill="#6e6e6e"/><rect x="0" y="27" width="1.3" height="1.3" fill="#6e6e6e"/><rect x="3" y="27" width="1.3" height="1.3" fill="#6e6e6e"/><rect x="6" y="27" width="1.3" height="1.3" fill="#6e6e6e"/></svg>
<svg style="left:82px;top:1045px" width="31" height="30" viewBox="0 0 31 30"><text x="3" y="27" font-family="Liberation Sans" font-weight="bold" font-size="42" fill="#2aa0e8">e</text><path d="M3 26Q0 30 6 28Q19 21 28 8Q31 2 24 4" fill="none" stroke="#f5c32b" stroke-width="2.2"/></svg>
<svg style="left:144px;top:1045px" width="31" height="30" viewBox="0 0 31 30"><rect x="12" y="7" width="18" height="15" fill="#fff" stroke="#0a72c6" stroke-width="2"/><path d="M13 8L21 16L29 8" fill="none" stroke="#0a72c6" stroke-width="2"/><path d="M0 4L15 1V29L0 26Z" fill="#0a72c6"/><ellipse cx="7.5" cy="15" rx="4" ry="5" fill="none" stroke="#fff" stroke-width="2.5"/></svg>
<svg style="left:205px;top:1046px" width="32" height="29" viewBox="0 0 32 29"><path d="M1 6H12L14 4H30V27H1Z" fill="#f1d27a" stroke="#c9a24a"/><rect x="5" y="3" width="3" height="2" fill="#5ac05a"/><rect x="12" y="3" width="3" height="2" fill="#e05040"/><rect x="21" y="7" width="3" height="2" fill="#4090e0"/><path d="M1 12H30V27H1Z" fill="#f7e3a2"/><path d="M7 27V20H24V27M10 27V23H21V27" fill="#bfe0f8" stroke="#4a9ad8" stroke-width="1.5"/></svg>
<svg style="left:267px;top:1045px" width="32" height="31" viewBox="0 0 32 31"><circle cx="16" cy="15.5" r="14" fill="#8a9096" stroke="#5a5e62" stroke-width="1.5"/><path d="M4 18Q8 27 17 25Q26 23 25 13L28 13L22 5L17 12H20Q21 19 15 20Q9 21 4 18Z" fill="#fff"/></svg>
<svg style="left:329px;top:1045px" width="32" height="31" viewBox="0 0 32 31"><circle cx="16" cy="16" r="14" fill="#e8541c"/><circle cx="17" cy="14" r="9" fill="#2a5aa8"/><path d="M3 12Q6 2 16 2Q27 2 30 13Q28 6 20 6Q25 10 22 16Q18 22 11 20Q5 18 5 11Z" fill="#f39a1e"/><path d="M4 21Q10 30 20 29Q14 27 11 21Z" fill="#f5c03a"/></svg>
<svg style="left:391px;top:1045px" width="32" height="31" viewBox="0 0 32 31"><path d="M2.5 3.5H24.5V29.5H2.5Z" fill="#7ed060" stroke="#333"/><path d="M2.5 3.5H24.5V12H2.5Z" fill="#fff" stroke="#333"/><path d="M7 20V10Q9 8 11 10V20" fill="none" stroke="#222" stroke-width="1.5"/><text x="12" y="16" font-size="8" font-family="Liberation Sans" fill="#222">++</text><path d="M29 2L31 4L20 26L18 27L18 24Z" fill="#f0d060" stroke="#7a5a20"/></svg>
<div class="a" style="left:439px;top:1041px;width:160px;height:39px;background:#dcdcdc;border:1px solid #bdbdbd;border-bottom:none"></div>
<div class="a" style="left:663px;top:1041px;width:159px;height:39px;background:#dcdcdc;border:1px solid #bdbdbd;border-bottom:none"></div>
<div class="a" style="left:823px;top:1041px;width:160px;height:39px;background:#dcdcdc;border:1px solid #bdbdbd;border-bottom:none"></div>
<div class="a" style="left:985px;top:1041px;width:159px;height:39px;background:#e4e4e4;border:1px solid #bdbdbd;border-bottom:none"></div>
<div class="a" style="left:1147px;top:1041px;width:159px;height:39px;background:#dcdcdc;border:1px solid #bdbdbd;border-bottom:none"></div>
<svg style="left:451px;top:1046px" width="29" height="29" viewBox="0 0 29 29"><circle cx="14.5" cy="14.5" r="13.5" fill="#db4437"/><path d="M14.5 14.5L26.2 21.25A13.5 13.5 0 0 1 2.8 21.25Z" fill="#0f9d58"/><path d="M14.5 14.5L2.8 21.25A13.5 13.5 0 0 1 14.5 1Z" fill="#db4437"/><path d="M14.5 14.5L14.5 1A13.5 13.5 0 0 1 26.2 21.25Z" fill="#f4c20d"/><circle cx="14.5" cy="14.5" r="6.5" fill="#fff"/><circle cx="14.5" cy="14.5" r="5" fill="#4285f4"/></svg>
<div class="t" style="left:485px;top:1053px;font-size:13.5px;color:#fff;letter-spacing:-0.560px;">localhost/Chinoo...</div>
<svg style="left:616px;top:1048px" width="30" height="24" viewBox="0 0 30 24"><rect x="1" y="2" width="28" height="21" rx="1" fill="#f2f2f2"/><path d="M1 3V23H6V9L15 16L24 9V23H29V3L15 14Z" fill="#d44638"/></svg>
<svg style="left:673px;top:1045px" width="32" height="31" viewBox="0 0 32 31"><rect x="12" y="5" width="19" height="21" fill="#fff" stroke="#c8462a"/><path d="M15 9H28M15 13H28M15 17H28M15 21H28" stroke="#c8462a"/><path d="M0 4L17 1V30L0 27Z" fill="#d24726"/><text x="3.5" y="20" font-size="13" font-weight="bold" font-family="Liberation Sans" fill="#fff">P</text></svg>
<div class="t" style="left:709px;top:1053px;font-size:13.5px;color:#fff;letter-spacing:-0.899px;">2015-06-01 Buildi...</div>
<svg style="left:832px;top:1046px" width="30" height="30" viewBox="0 0 30 30"><path d="M8.5 0.5H23L28.5 6V29.5H8.5Z" fill="#fff" stroke="#999"/><path d="M20 8A5 5 0 1 0 21 14Z" fill="#aaa"/><path d="M12 19H26M12 22H26M12 25H26" stroke="#e07a5a"/><rect x="1" y="12" width="13" height="14" fill="#d24726"/><text x="3.5" y="23" font-size="10" font-weight="bold" font-family="Liberation Sans" fill="#fff">P</text></svg>
<div class="t" style="left:869px;top:1053px;font-size:13.5px;color:#fff;letter-spacing:-0.885px;">PowerPoint Slide ...</div>
<svg style="left:995px;top:1044px" width="33" height="33" viewBox="0 0 33 33"><path d="M0 0H32V20Q32 32 20 32H0Z" fill="#ea5a1e"/><text x="4" y="23" font-size="17" font-weight="bold" font-family="Liberation Sans" fill="#fff" letter-spacing="-2">DF</text></svg>
<div class="t" style="left:1031px;top:1053px;font-size:13.5px;color:#fff;letter-spacing:-0.685px;">Running - Chinoo...</div>
<svg style="left:1157px;top:1044px" width="33" height="33" viewBox="0 0 33 33"><rect x="1" y="1" width="7" height="11" rx="2" fill="#f0c030" stroke="#a07a10"/><path d="M11 2H22V12M22 20V24H18M8 24H2V16" fill="none" stroke="#3aa03a" stroke-width="2" stroke-dasharray="2 2"/><path d="M12 30L26 16M14 14L28 30" stroke="#555" stroke-width="3"/><path d="M10 12L16 10L18 14L14 17Z" fill="#8a8a8a"/></svg>
<div class="t" style="left:1193px;top:1053px;font-size:13.5px;color:#fff;letter-spacing:-0.990px;">SQLQuery2.sql - (I...</div>
<svg style="left:1618px;top:1045px" width="9" height="30" viewBox="0 0 9 30"><rect x="0" y="0" width="1.3" height="1.3" fill="#6e6e6e"/><rect x="3" y="0" width="1.3" height="1.3" fill="#6e6e6e"/><rect x="6" y="0" width="1.3" height="1.3" fill="#6e6e6e"/><rect x="0" y="3" width="1.3" height="1.3" fill="#6e6e6e"/><rect x="3" y="3" width="1.3" height="1.3" fill="#6e6e6e"/><rect x="6" y="3" width="1.3" height="1.3" fill="#6e6e6e"/><rect x="0" y="6" width="1.3" height="1.3" fill="#6e6e6e"/><rect x="3" y="6" width="1.3" height="1.3" fill="#6e6e6e"/><rect x="6" y="6" width="1.3" height="1.3" fill="#6e6e6e"/><rect x="0" y="9" width="1.3" height="1.3" fill="#6e6e6e"/><rect x="3" y="9" width="1.3" height="1.3" fill="#6e6e6e"/><rect x="6" y="9" width="1.3" height="1.3" fill="#6e6e6e"/><rect x="0" y="12" width="1.3" height="1.3" fill="#6e6e6e"/><rect x="3" y="12" width="1.3" height="1.3" fill="#6e6e6e"/><rect x="6" y="12" width="1.3" height="1.3" fill="#6e6e6e"/><rect x="0" y="15" width="1.3" height="1.3" fill="#6e6e6e"/><rect x="3" y="15" width="1.3" height="1.3" fill="#6e6e6e"/><rect x="6" y="15" width="1.3" height="1.3" fill="#6e6e6e"/><rect x="0" y="18" width="1.3" height="1.3" fill="#6e6e6e"/><rect x="3" y="18" width="1.3" height="1.3" fill="#6e6e6e"/><rect x="6" y="18" width="1.3" height="1.3" fill="#6e6e6e"/><rect x="0" y="21" width="1.3" height="1.3" fill="#6e6e6e"/><rect x="3" y="21" width="1.3" height="1.3" fill="#6e6e6e"/><rect x="6" y="21" width="1.3" height="1.3" fill="#6e6e6e"/><rect x="0" y="24" width="1.3" height="1.3" fill="#6e6e6e"/><rect x="3" y="24" width="1.3" height="1.3" fill="#6e6e6e"/><rect x="6" y="24" width="1.3" height="1.3" fill="#6e6e6e"/><rect x="0" y="27" width="1.3" height="1.3" fill="#6e6e6e"/><rect x="3" y="27" width="1.3" height="1.3" fill="#6e6e6e"/><rect x="6" y="27" width="1.3" height="1.3" fill="#6e6e6e"/></svg>
<svg style="left:1636px;top:1050px" width="31" height="20" viewBox="0 0 31 20"><rect x="1" y="1" width="29" height="17" rx="1.5" fill="#fff" stroke="#444" stroke-width="1.6"/><path d="M3.5 4.5H27.5M3.5 8.5H27.5M3.5 12.5H27.5M7.5 4.5V12.5M11.5 4.5V12.5M15.5 4.5V12.5M19.5 4.5V12.5M23.5 4.5V12.5" stroke="#555" stroke-width="0.9" fill="none"/><rect x="7.5" y="12.5" width="16" height="3" fill="#fff" stroke="#555" stroke-width="0.9"/></svg>
<svg style="left:1680px;top:1045px" width="9" height="30" viewBox="0 0 9 30"><rect x="0" y="0" width="1.3" height="1.3" fill="#6e6e6e"/><rect x="3" y="0" width="1.3" height="1.3" fill="#6e6e6e"/><rect x="6" y="0" width="1.3" height="1.3" fill="#6e6e6e"/><rect x="0" y="3" width="1.3" height="1.3" fill="#6e6e6e"/><rect x="3" y="3" width="1.3" height="1.3" fill="#6e6e6e"/><rect x="6" y="3" width="1.3" height="1.3" fill="#6e6e6e"/><rect x="0" y="6" width="1.3" height="1.3" fill="#6e6e6e"/><rect x="3" y="6" width="1.3" height="1.3" fill="#6e6e6e"/><rect x="6" y="6" width="1.3" height="1.3" fill="#6e6e6e"/><rect x="0" y="9" width="1.3" height="1.3" fill="#6e6e6e"/><rect x="3" y="9" width="1.3" height="1.3" fill="#6e6e6e"/><rect x="6" y="9" width="1.3" height="1.3" fill="#6e6e6e"/><rect x="0" y="12" width="1.3" height="1.3" fill="#6e6e6e"/><rect x="3" y="12" width="1.3" height="1.3" fill="#6e6e6e"/><rect x="6" y="12" width="1.3" height="1.3" fill="#6e6e6e"/><rect x="0" y="15" width="1.3" height="1.3" fill="#6e6e6e"/><rect x="3" y="15" width="1.3" height="1.3" fill="#6e6e6e"/><rect x="6" y="15" width="1.3" height="1.3" fill="#6e6e6e"/><rect x="0" y="18" width="1.3" height="1.3" fill="#6e6e6e"/><rect x="3" y="18" width="1.3" height="1.3" fill="#6e6e6e"/><rect x="6" y="18" width="1.3" height="1.3" fill="#6e6e6e"/><rect x="0" y="21" width="1.3" height="1.3" fill="#6e6e6e"/><rect x="3" y="21" width="1.3" height="1.3" fill="#6e6e6e"/><rect x="6" y="21" width="1.3" height="1.3" fill="#6e6e6e"/><rect x="0" y="24" width="1.3" height="1.3" fill="#6e6e6e"/><rect x="3" y="24" width="1.3" height="1.3" fill="#6e6e6e"/><rect x="6" y="24" width="1.3" height="1.3" fill="#6e6e6e"/><rect x="0" y="27" width="1.3" height="1.3" fill="#6e6e6e"/><rect x="3" y="27" width="1.3" height="1.3" fill="#6e6e6e"/><rect x="6" y="27" width="1.3" height="1.3" fill="#6e6e6e"/></svg>
<div class="t" style="left:1698px;top:1052px;font-size:12.5px;color:#f2f2f2;letter-spacing:-2.484px;">NL</div>
<svg style="left:1728px;top:1057px" width="9" height="6" viewBox="0 0 9 6"><path d="M0.5 5.5L4.5 1L8.5 5.5Z" fill="#fff" stroke="#777" stroke-width="0.8"/></svg>
<svg style="left:1748px;top:1052px" width="18" height="18" viewBox="0 0 18 18"><path d="M2 1V17" stroke="#555" stroke-width="1.5"/><path d="M2.5 1.5H13L10 5L13 8.5H2.5Z" fill="#fff" stroke="#666"/><circle cx="12.5" cy="13" r="4.3" fill="#e03030" stroke="#fff"/><path d="M10.8 11.3L14.2 14.7M14.2 11.3L10.8 14.7" stroke="#fff" stroke-width="1.2"/></svg>
<svg style="left:1773px;top:1052px" width="17" height="18" viewBox="0 0 17 18"><rect x="7.5" y="2.5" width="9" height="15" rx="1" fill="#fff" stroke="#555" stroke-width="1.4"/><path d="M1 6H6M2 2V6M5 2V6M3.5 6V17" stroke="#555" stroke-width="1.3"/></svg>
<svg style="left:1796px;top:1052px" width="18" height="17" viewBox="0 0 18 17"><rect x="4.5" y="4.5" width="13" height="10" fill="#fff" stroke="#555" stroke-width="1.3"/><rect x="0.5" y="0.5" width="6" height="5" fill="#fff" stroke="#555"/><path d="M11 15V17M8 17H14" stroke="#555"/></svg>
<svg style="left:1820px;top:1052px" width="18" height="17" viewBox="0 0 18 17"><path d="M1 6H5L10 1V16L5 11H1Z" fill="#fff" stroke="#555" stroke-width="1.2"/><path d="M12 5Q14 8.5 12 12M14.5 3Q17.5 8.5 14.5 14" fill="none" stroke="#666" stroke-width="1.2"/></svg>
</body></html>
